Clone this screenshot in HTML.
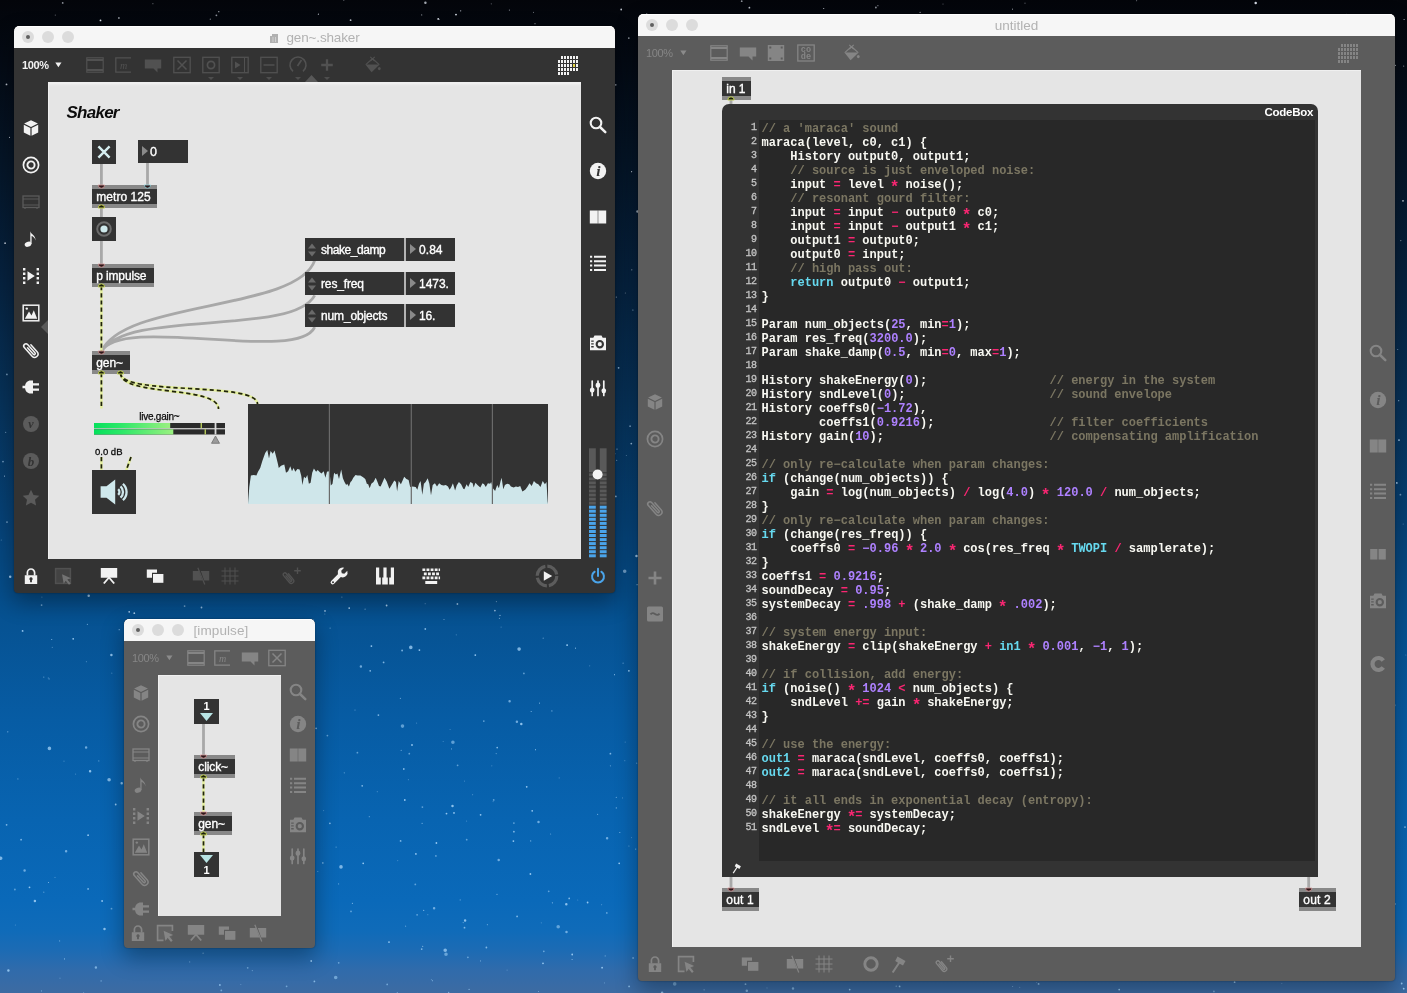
<!DOCTYPE html>
<html><head><meta charset="utf-8"><title>Max gen~ shaker</title>
<style>
*{box-sizing:border-box;margin:0;padding:0}
html,body{width:1407px;height:993px;overflow:hidden;background:#04070c}
body{position:relative;font-family:"Liberation Sans",sans-serif;font-size:12px;color:#fff}
.abs{position:absolute}
#bg{position:absolute;left:0;top:0;width:1407px;height:993px;
 background:linear-gradient(180deg,#03050a 0px,#040a14 60px,#051527 160px,#06223f 280px,#073259 400px,#064277 520px,#065292 620px,#075ca4 720px,#0864b1 820px,#0a69b9 900px,#0f6bb9 930px,#1c6bb4 950px,#306bab 970px,#3d6ba2 993px)}
.win{will-change:transform;position:absolute;border-radius:5px 5px 4px 4px;box-shadow:0 9px 22px 1px rgba(0,0,0,.32),0 0 2px rgba(0,0,0,.4);overflow:hidden}
.tbar{position:absolute;left:0;top:0;right:0;height:22px;background:#f6f6f6;border-radius:5px 5px 0 0;box-shadow:inset 0 1px 0 #fff}
.tl{position:absolute;width:12px;height:12px;border-radius:50%;background:#dcdcdc;top:5px}
.tl.d:after{content:"";position:absolute;left:4px;top:4px;width:4px;height:4px;border-radius:50%;background:#606060}
.ttl{position:absolute;top:0;height:22px;line-height:24px;font-size:13.5px;color:#b2b2b2;white-space:nowrap}
.body{position:absolute;left:0;right:0;top:22px;bottom:0}
.win.act{background:#333}
.win.ina{background:#5c5c5c}
.cv{position:absolute;background:#e5e5e5;overflow:hidden}
.cv:after{content:"";position:absolute;left:0;top:0;right:0;bottom:0;box-shadow:inset 1px 1px 0 #f0f0f0;pointer-events:none}
.cv.g{background:linear-gradient(180deg,#f1f1f1 0,#f0f0f0 1.5px,#e8e8e8 3px,#e5e5e5 5px)}
.ic{position:absolute;width:20px;height:20px;overflow:visible}
.act .ic{color:#f2f2f2}
.act .ic.dm{color:#515151}
.act .ic.dm2{color:#5b5b5b}
.ina .ic{color:#858585}
.zm{position:absolute;font-size:11px;letter-spacing:-.4px;white-space:nowrap}
.act .zm{font-weight:bold}
.act .zm{color:#f2f2f2}
.ina .zm{color:#868686}
/* max objects */
.ob{position:absolute;height:23px;background:#333;border-top:4px solid #888;border-bottom:4px solid #888;color:#fff;font-size:12px;-webkit-text-stroke:.35px #fff;line-height:17px;padding-left:4.300px;white-space:nowrap}
.ui{position:absolute;background:#333}
.nb{position:absolute;height:23px;background:#333;color:#fff;font-size:12px;-webkit-text-stroke:.35px #fff;line-height:25px;white-space:nowrap}
.nb i{position:absolute;left:4px;top:6px;width:0;height:0;border-left:6px solid #8a8a8a;border-top:5.5px solid transparent;border-bottom:5.5px solid transparent}
.cm{position:absolute;color:#0c0c0c;white-space:nowrap}
svg.cords{position:absolute;left:0;top:0;overflow:visible;pointer-events:none}
.pc{fill:none;stroke:#a8a8a8;stroke-width:2.8}
.sgb{fill:none;stroke:#e3ee9c;stroke-width:2.5}
.sgd{fill:none;stroke:#1f220c;stroke-width:1.7;stroke-dasharray:4.2 3}
/* code */
.code{position:absolute;font-family:"Liberation Mono",monospace;font-size:12px;line-height:14px;white-space:pre;color:#f8f8f2;font-weight:bold}
.ln{position:absolute;font-family:"Liberation Mono",monospace;font-size:10px;letter-spacing:-.5px;line-height:14px;text-align:right;color:#c4c4c4;white-space:pre;-webkit-text-stroke:.3px #c4c4c4}
.code u{text-decoration:none;display:inline-block;transform:translateY(2.600px) scale(1.35);transform-origin:50% 50%}
.c{color:#7b7662}.k{color:#f92672}.n{color:#ae81ff}.b{color:#66d9ef}
</style></head><body>
<div id="bg"></div>
<svg class="abs" style="left:0;top:0" width="1407" height="993" fill="none" stroke-linecap="round"><path d="M1170.2 62.7h0M905.7 115.7h0M1219.2 181.5h0M1053.8 68.7h0M533.5 12.4h0M295.3 133.6h0M26.9 134.9h0M1095.1 193.2h0M365.1 26.7h0M1142.3 219.7h0M491.3 3.8h0M1279.4 36.1h0M668.7 291.4h0M990.4 99.7h0M1304.1 138.1h0M830.0 227.4h0M1113.1 234.3h0M532.9 48.9h0M1006.3 266.7h0M318.0 290.0h0M512.6 62.5h0M943.0 4.0h0M355.2 187.3h0M957.1 176.1h0M945.6 243.0h0M939.8 154.6h0M1091.8 118.9h0M239.5 103.8h0M558.1 223.7h0M1346.7 23.9h0M1136.6 0.7h0M806.8 22.2h0M757.7 49.9h0M768.1 167.0h0M351.4 176.7h0M896.3 26.5h0M1227.3 224.9h0M833.0 266.8h0M528.6 162.1h0M322.7 29.6h0M800.4 97.4h0M625.4 293.0h0M1025.0 3.2h0M797.0 153.7h0M130.0 144.1h0M1318.7 207.2h0M666.6 126.6h0M537.0 175.1h0M161.7 29.3h0M439.5 19.3h0M152.9 3.7h0M1346.4 14.3h0M1133.9 214.5h0M819.2 246.0h0M1311.3 297.4h0M872.5 296.0h0M1187.1 19.7h0M1203.4 108.9h0M1113.1 277.5h0M209.9 251.3h0M509.1 159.5h0M427.7 180.9h0M969.4 34.9h0M647.2 164.7h0M778.2 232.1h0M93.5 56.6h0M1059.6 291.7h0M56.9 236.5h0M1229.4 208.9h0M55.3 15.1h0M1390.3 135.9h0M754.9 30.4h0M707.9 125.9h0M773.8 84.8h0M115.4 38.8h0M711.7 59.7h0M737.3 201.4h0M936.7 174.4h0M937.2 34.7h0M610.9 132.0h0M378.7 254.9h0M1305.9 202.1h0M1036.3 143.7h0M1188.4 180.1h0M139.6 209.0h0M1131.2 261.1h0M149.9 89.6h0M671.8 189.4h0M343.8 0.3h0M1086.1 169.0h0" stroke="#e6ecf6" stroke-width="1.2" opacity="0.4"/><path d="M1369.1 91.5h0M841.9 74.3h0M1295.1 254.0h0M186.5 87.5h0M161.5 107.3h0M565.0 50.1h0M15.2 256.7h0M1236.4 39.2h0M470.7 271.7h0M509.4 10.1h0M528.4 166.5h0M836.9 222.4h0M562.0 215.9h0M925.2 236.0h0M852.7 156.2h0M745.6 258.9h0M1106.9 60.7h0M337.4 92.4h0M458.0 251.6h0M862.2 63.2h0M1132.6 291.6h0M800.4 271.9h0M786.4 150.6h0M253.4 46.6h0M524.5 181.1h0M1173.3 116.6h0M58.2 276.3h0M1083.1 198.8h0M85.7 220.7h0M1403.7 66.1h0M74.6 92.2h0M682.2 270.7h0M1090.7 258.0h0M1350.0 31.6h0M247.2 148.9h0M1074.2 242.7h0M1321.0 71.2h0M114.6 221.4h0M654.4 181.3h0M481.9 195.1h0M224.8 257.9h0M460.8 69.5h0M1289.6 78.5h0M951.1 97.4h0M421.7 14.9h0M323.6 178.7h0M867.5 161.0h0M71.2 283.7h0M919.6 96.4h0M1277.9 49.2h0M1315.0 123.2h0M140.3 117.5h0M431.2 187.2h0M314.5 197.7h0M1400.8 240.6h0M329.7 151.1h0M1389.9 15.4h0M947.3 238.3h0M1189.5 217.4h0M697.6 268.1h0M631.8 269.8h0M1106.3 62.8h0M313.9 154.7h0M877.9 5.7h0M601.2 290.1h0M38.5 28.0h0M24.4 27.1h0M743.2 163.7h0M911.7 165.9h0M1180.5 29.1h0M520.1 38.0h0M913.7 118.3h0M1316.2 164.5h0M1386.4 80.5h0M463.0 85.9h0M1341.5 197.2h0M1011.5 24.6h0M590.3 162.4h0M616.3 297.1h0M1012.5 9.2h0M499.2 149.8h0M357.1 286.3h0M1056.1 68.5h0M1041.7 24.7h0M535.0 23.7h0M210.3 19.2h0M812.9 123.0h0M1343.7 114.0h0" stroke="#e6ecf6" stroke-width="1.2" opacity="0.6"/><path d="M1404.1 19.5h0M543.3 73.8h0M1150.6 247.8h0M85.1 175.0h0M1384.5 114.5h0M171.6 92.6h0M218.8 11.7h0M498.9 208.6h0M762.1 72.0h0M673.3 209.2h0M398.1 141.9h0M1288.2 244.0h0M94.3 73.8h0M920.1 12.3h0M435.8 271.9h0M915.6 105.5h0M468.2 291.4h0M1160.9 116.5h0M1389.7 33.4h0M437.6 42.0h0M256.1 260.5h0M379.6 256.3h0M371.5 103.2h0M1127.3 124.3h0M377.1 269.2h0M240.9 66.9h0M949.5 269.1h0M452.5 93.5h0M260.2 38.0h0M188.2 122.7h0M548.4 297.4h0M159.3 117.6h0M981.3 231.9h0M91.8 178.5h0M1327.4 151.1h0M143.1 138.5h0M189.8 298.1h0M48.5 246.1h0M951.6 122.3h0M1333.1 282.1h0M800.1 56.0h0M1395.3 65.4h0M105.5 225.2h0M534.9 271.7h0M401.0 294.1h0M795.1 237.2h0M493.5 66.6h0M1318.3 222.3h0M173.5 248.5h0M1067.3 180.6h0M1032.6 28.3h0M739.6 23.9h0M321.3 242.7h0M816.8 127.1h0M1178.8 43.2h0M318.4 14.2h0M461.8 175.1h0M1292.9 99.5h0M343.0 124.9h0M751.9 55.7h0M586.2 49.6h0M341.7 116.5h0M541.1 86.4h0M1097.6 103.0h0M9.5 137.3h0M293.0 266.4h0M740.2 54.7h0M1305.1 142.3h0M1346.8 281.4h0M1085.7 295.4h0M631.6 171.7h0M577.7 72.1h0M357.6 282.7h0M47.3 271.4h0M823.7 8.5h0M1249.7 125.5h0M131.4 279.9h0M298.1 190.9h0M186.9 186.5h0M524.5 241.7h0M604.9 156.4h0M804.5 25.3h0M160.3 284.8h0M954.2 62.0h0M158.7 81.1h0M1325.2 28.7h0M1141.9 183.0h0M460.7 10.8h0M200.5 104.0h0M45.4 260.9h0M898.7 22.9h0M496.1 227.8h0M191.5 203.4h0M898.2 270.8h0M1134.7 23.7h0M1325.4 269.6h0M583.4 60.3h0M1216.8 17.6h0" stroke="#e6ecf6" stroke-width="1.2" opacity="0.8"/><path d="M665.9 77.1h0M569.5 248.8h0M1082.3 264.5h0M815.7 133.5h0M107.0 211.8h0M434.0 114.0h0M874.8 130.5h0M798.3 26.5h0M1168.9 184.3h0M938.5 274.9h0M1033.0 28.6h0M960.8 182.3h0M461.7 254.2h0M275.8 277.7h0M926.5 265.8h0M609.8 228.3h0M720.7 291.9h0M880.3 265.5h0M1182.0 208.3h0M566.0 283.8h0M1133.7 97.0h0M383.4 150.1h0M444.9 168.3h0M783.9 137.1h0M201.9 204.1h0M37.9 265.0h0M575.3 86.3h0M299.3 296.3h0M407.6 284.0h0M875.9 7.5h0M477.3 70.9h0M555.6 272.8h0M741.7 1.2h0M118.9 18.0h0M1332.4 121.4h0M216.4 15.3h0M1121.1 37.1h0M272.1 79.2h0M326.8 57.7h0M882.1 249.5h0M961.0 177.2h0M889.7 146.6h0M666.3 108.0h0M844.8 116.2h0M986.6 205.4h0M451.1 54.9h0M854.3 256.5h0M504.7 264.7h0M1342.6 48.5h0M86.3 81.6h0M1185.5 154.3h0M615.7 84.8h0M665.7 108.8h0M707.6 238.0h0M608.0 293.9h0M1362.8 18.4h0M525.5 250.3h0M1043.4 205.0h0M602.7 90.6h0M662.8 112.5h0M367.5 293.0h0M912.2 133.5h0M628.8 38.1h0M355.1 132.2h0M226.4 143.9h0M319.0 243.5h0M949.4 39.6h0M603.2 229.3h0M774.7 68.8h0M107.1 120.6h0M741.9 159.9h0M62.7 2.9h0M1099.1 275.8h0M1223.5 243.1h0M895.0 53.7h0" stroke="#e6ecf6" stroke-width="1.8" opacity="0.6"/><path d="M6.5 84.4h0M1121.4 176.4h0M621.2 9.5h0M428.4 140.2h0M63.9 97.8h0M110.5 82.4h0M791.8 175.4h0M360.8 198.5h0M1287.5 167.4h0M846.3 121.8h0M451.2 54.3h0M793.5 163.0h0M746.9 45.0h0M416.1 118.0h0M1159.9 158.4h0M676.3 161.4h0M902.2 124.7h0M1403.0 200.8h0M254.2 127.1h0M990.0 233.4h0M1121.6 108.8h0M1309.2 198.9h0M350.6 20.2h0M939.6 284.5h0M920.7 258.4h0M1293.8 22.7h0M437.1 184.6h0M716.2 21.4h0M748.3 111.9h0M921.5 35.0h0M52.8 28.2h0M1313.2 138.1h0M1323.9 57.0h0M134.6 168.4h0M1374.6 176.9h0M560.8 76.5h0M100.3 243.8h0M285.3 293.4h0M1159.1 263.4h0M365.1 46.2h0M22.3 28.5h0M1092.8 141.0h0M312.2 290.1h0M275.7 261.5h0M734.4 222.1h0M340.6 42.7h0M749.4 7.7h0M211.0 81.7h0M984.3 256.1h0M377.1 75.7h0M881.6 57.7h0M757.0 211.4h0M336.8 27.5h0M198.8 128.0h0M429.5 273.1h0M5.1 243.2h0M582.3 64.7h0M1208.3 238.1h0M687.7 27.6h0M379.9 45.1h0M900.0 70.6h0M441.1 166.6h0M503.9 244.0h0M1037.7 21.3h0M1226.4 195.0h0M1062.3 28.0h0M24.4 285.7h0M593.6 97.5h0M380.4 201.4h0" stroke="#e6ecf6" stroke-width="1.8" opacity="0.8"/><path d="M426.9 90.0h0M991.3 255.2h0M1347.1 112.1h0M1166.0 276.2h0M790.1 163.2h0M806.2 199.6h0M149.4 37.2h0M869.7 45.9h0M976.0 82.3h0M994.2 258.6h0M929.2 66.4h0M75.2 252.1h0M95.3 236.2h0M1175.8 61.3h0M456.0 14.6h0M533.9 285.1h0M234.1 142.7h0M428.0 219.4h0M875.2 88.4h0M1209.4 209.8h0M705.2 225.0h0M464.3 147.3h0M113.6 116.9h0M1148.8 236.9h0M590.0 82.2h0M97.6 265.4h0M1105.0 58.5h0M438.2 18.9h0M797.3 73.8h0M1057.3 47.2h0M952.1 20.6h0M646.7 14.5h0M1090.8 156.7h0M1332.0 291.1h0M662.9 139.8h0M968.8 213.8h0M519.7 284.0h0M603.7 279.2h0M967.0 154.3h0M490.2 241.1h0M674.1 284.2h0M659.5 269.6h0M262.8 177.0h0M1140.8 23.5h0M1123.9 291.1h0M1330.5 119.9h0M1302.0 106.6h0M21.2 198.4h0M821.7 262.9h0M346.1 229.6h0M376.0 117.5h0M229.4 226.9h0M666.7 278.0h0M720.7 99.4h0M100.5 20.4h0M307.2 150.7h0M706.0 119.8h0M101.6 153.7h0M438.6 218.7h0M64.6 180.9h0M736.6 16.5h0M419.6 268.7h0M1352.7 234.3h0M1349.7 114.7h0M1250.3 217.9h0M534.2 61.3h0M78.3 63.1h0M933.7 15.7h0" stroke="#e6ecf6" stroke-width="1.8" opacity="0.95"/><path d="M864.3 278.3h0M517.5 44.2h0M651.0 75.7h0M456.1 139.0h0M425.4 2.7h0M581.5 142.0h0M272.7 250.9h0M186.1 135.1h0M125.4 99.6h0M957.8 202.4h0M199.4 298.7h0M1175.4 136.2h0M96.2 296.2h0M86.5 180.9h0M1068.1 153.6h0M534.4 176.8h0M392.6 52.6h0M1113.5 263.8h0M637.5 211.5h0M956.7 116.1h0M1191.5 267.7h0M1308.2 49.3h0M975.5 55.4h0" stroke="#e6ecf6" stroke-width="2.5" opacity="0.7"/><path d="M1275.1 86.6h0M69.7 271.1h0M859.9 58.1h0M335.4 113.1h0M744.4 272.1h0M1368.6 65.3h0M502.6 244.6h0M578.0 44.8h0M468.6 150.5h0M865.6 182.4h0M986.7 27.5h0M851.3 50.6h0M415.5 42.0h0M955.6 46.2h0M85.1 36.5h0M404.8 48.3h0M937.6 249.9h0M1323.9 269.7h0M910.8 24.3h0M931.4 22.9h0M862.1 246.4h0M482.9 130.8h0M1235.8 265.1h0M239.4 264.7h0M1255.7 2.9h0" stroke="#e6ecf6" stroke-width="2.5" opacity="0.9"/><path d="M903.1 99.6h0M1092.2 93.6h0M386.5 229.1h0" stroke="#e6ecf6" stroke-width="3.6" opacity="0.6"/><path d="M226.3 233.1h0M1077.1 111.9h0M612.2 58.6h0M718.1 266.9h0M261.5 198.8h0M849.9 281.9h0M310.2 244.5h0" stroke="#e6ecf6" stroke-width="3.6" opacity="0.8"/><path d="M920.1 611.3h0M1241.2 599.3h0M41.9 597.1h0M280.5 471.8h0M1062.4 531.1h0M481.3 418.5h0M1273.5 477.9h0M108.1 511.1h0M161.9 619.9h0M74.5 567.9h0M166.4 402.9h0M464.8 517.0h0M1199.7 599.1h0M258.3 545.7h0M425.2 603.7h0M1.3 540.0h0M292.6 393.5h0M1053.8 530.2h0M436.2 510.6h0M936.3 416.4h0M528.3 537.4h0M743.2 448.5h0M858.3 355.0h0M1356.0 410.5h0M220.3 527.4h0M523.3 312.2h0M274.8 364.8h0M702.1 377.7h0M1130.6 317.2h0M1073.1 397.7h0M1298.0 510.6h0M324.8 614.0h0M725.8 313.8h0M1403.2 524.0h0M77.0 470.3h0M958.3 404.7h0M1120.5 616.0h0M279.6 552.8h0M758.3 356.9h0M1190.9 482.4h0M1129.2 323.8h0M749.8 577.6h0M544.5 356.8h0M281.2 375.8h0M757.7 366.5h0M1351.5 406.5h0M244.2 304.5h0M126.3 577.7h0M1130.6 601.9h0M626.4 455.5h0M781.0 531.3h0M1063.6 476.6h0M1200.9 454.2h0M111.6 422.0h0M1188.7 508.6h0M1024.3 557.7h0M412.1 571.5h0M1254.2 545.3h0M1014.3 411.6h0M313.6 619.8h0M104.7 419.8h0M712.3 519.7h0M20.5 448.0h0M689.2 435.8h0M479.2 318.2h0M892.3 562.3h0M101.0 470.4h0M886.4 570.0h0M24.4 445.2h0M515.0 492.6h0M802.8 320.4h0M521.4 363.7h0M289.8 353.4h0M169.9 343.1h0M114.0 555.9h0M1140.9 339.1h0M1376.4 529.0h0M1304.0 500.6h0M1054.9 550.3h0M983.1 569.5h0M840.3 332.6h0M595.9 381.1h0M157.5 433.5h0M510.0 346.5h0M113.2 468.9h0M751.5 535.4h0M418.0 551.6h0" stroke="#b4d6f4" stroke-width="1.2" opacity="0.4"/><path d="M669.4 609.7h0M892.7 591.3h0M341.9 597.1h0M1204.1 346.1h0M378.8 469.8h0M152.8 416.6h0M278.2 526.6h0M1211.6 354.2h0M601.7 366.7h0M349.4 359.2h0M1200.7 481.4h0M1273.7 446.9h0M1155.3 383.2h0M191.7 474.5h0M280.7 464.7h0M1349.8 595.9h0M977.7 522.5h0M212.3 591.2h0M1002.9 402.5h0M168.6 489.5h0M320.2 478.8h0M90.3 416.2h0M294.7 367.3h0M517.6 426.2h0M912.7 331.5h0M1229.3 469.1h0M1397.7 349.5h0M586.7 536.3h0M941.5 433.1h0M899.2 488.5h0M749.7 576.6h0M583.1 403.9h0M642.5 429.4h0M444.0 619.5h0M365.1 609.2h0M1116.3 491.0h0M722.7 535.7h0M500.7 357.5h0M1315.7 317.7h0M799.4 504.4h0M680.9 395.2h0M1347.5 416.3h0M912.2 371.7h0M448.3 512.6h0M614.9 453.7h0M42.5 314.5h0M1036.7 300.7h0M472.3 488.0h0M674.7 335.8h0M777.7 497.8h0M1195.2 545.7h0M981.6 355.3h0M187.6 308.4h0M616.7 460.3h0M694.7 417.0h0M193.0 301.9h0M803.4 541.1h0M875.9 578.1h0M1210.3 544.4h0M334.6 342.0h0M1102.6 547.2h0M894.8 574.6h0M742.6 581.6h0M1202.5 547.4h0M423.9 365.9h0M581.2 588.8h0M797.2 397.2h0M1057.5 336.1h0M1040.1 372.7h0M837.2 580.7h0M1031.5 464.6h0M118.6 450.9h0M855.3 333.3h0M742.9 401.3h0M500.6 582.6h0M1013.4 562.9h0M169.4 433.4h0M499.4 618.3h0M886.4 340.1h0M711.7 570.3h0M751.8 398.3h0M808.7 499.9h0M338.7 538.6h0M1304.2 560.0h0M496.4 601.6h0M5.7 432.3h0M791.6 530.8h0M482.1 512.2h0M706.6 412.2h0M657.5 577.2h0M939.3 433.5h0M1338.7 550.7h0M569.6 406.0h0M588.6 436.1h0M1261.6 343.0h0M955.4 613.7h0M395.1 540.4h0M1027.5 492.6h0M1025.8 486.5h0M981.1 540.9h0M443.1 315.8h0M1212.2 301.6h0M779.5 324.4h0M896.8 593.4h0M326.5 470.9h0" stroke="#b4d6f4" stroke-width="1.2" opacity="0.6"/><path d="M1379.4 394.6h0M153.4 508.8h0M997.0 566.6h0M500.0 615.4h0M1076.0 324.5h0M1322.0 565.7h0M400.2 395.8h0M107.0 303.6h0M496.1 496.9h0M371.0 564.1h0M287.8 380.3h0M1131.5 475.0h0M455.2 370.7h0M169.4 321.4h0M632.9 310.0h0M707.1 400.5h0M1094.2 521.4h0M867.3 342.2h0M101.5 493.2h0M279.6 411.1h0M124.4 361.0h0M1139.2 500.2h0M637.1 584.7h0M641.3 483.4h0M917.1 538.7h0M796.4 346.3h0M498.4 495.5h0M441.1 551.1h0M4.5 476.1h0M932.5 398.1h0M1385.9 618.5h0M1089.2 330.9h0M1237.5 451.5h0M1050.5 574.9h0M743.3 491.7h0M660.0 508.2h0M751.8 333.5h0M832.3 542.8h0M341.6 308.9h0M253.8 496.7h0M365.3 493.2h0M1344.0 386.6h0M377.3 558.0h0M1188.3 541.6h0M225.5 345.8h0M1159.6 342.0h0M914.1 368.8h0M856.1 417.1h0M992.1 421.8h0M1068.4 334.4h0M429.8 476.3h0M923.3 500.4h0M186.8 310.5h0M654.7 560.5h0M286.0 459.1h0M1175.4 377.2h0M170.6 300.6h0M580.2 542.5h0M577.3 469.5h0M771.2 441.4h0M697.0 445.6h0M1085.6 574.7h0M405.8 369.9h0M1364.7 477.6h0M326.1 434.5h0M768.8 332.7h0M963.0 388.5h0M356.8 400.6h0M737.9 591.8h0M197.1 487.2h0M1278.4 562.1h0M1322.0 502.2h0M824.3 389.8h0M277.2 455.3h0M501.8 313.7h0M267.5 497.6h0M543.7 458.0h0M1035.9 340.6h0M1398.7 400.7h0M1385.3 372.7h0M1200.2 326.5h0M660.9 420.5h0M68.4 492.2h0M868.3 344.2h0M667.5 465.8h0M464.7 306.0h0M774.2 502.5h0M1092.5 509.3h0M18.6 392.7h0M739.8 401.6h0M888.8 337.4h0M1185.8 432.6h0M662.9 517.4h0M990.5 462.7h0M617.0 449.1h0M562.6 339.4h0M99.5 409.3h0M460.2 347.9h0M1323.9 517.2h0M1133.4 486.4h0" stroke="#b4d6f4" stroke-width="1.2" opacity="0.8"/><path d="M179.0 583.2h0M182.8 450.4h0M243.3 332.7h0M6.9 374.4h0M304.2 539.1h0M1170.9 418.7h0M1339.3 498.6h0M1138.5 619.4h0M1147.1 460.3h0M90.1 543.0h0M293.2 539.6h0M1242.4 449.1h0M314.1 305.0h0M1112.2 369.9h0M755.9 420.5h0M1343.2 360.1h0M399.2 388.9h0M433.3 527.7h0M893.1 375.5h0M884.5 501.3h0M150.9 437.4h0M521.9 363.6h0M153.2 410.1h0M143.9 304.4h0M64.0 398.4h0M165.5 472.4h0M753.4 469.7h0M3.0 461.6h0M1400.4 494.7h0M1125.1 441.1h0M692.3 381.4h0M1043.5 459.7h0M846.3 505.9h0M869.6 318.1h0M41.6 605.1h0M954.2 553.8h0M263.7 501.9h0M1055.3 427.0h0M630.1 426.2h0M900.4 451.3h0M910.9 609.1h0M642.2 364.0h0M52.4 374.6h0M112.2 318.4h0M459.6 319.2h0M1318.4 428.8h0M574.2 427.0h0M1044.0 613.5h0M483.0 418.4h0M186.7 538.6h0M1328.6 491.0h0M1223.2 333.9h0M1284.1 339.6h0M231.2 458.4h0M1256.2 383.6h0M7.0 522.1h0M184.6 606.1h0M411.3 434.1h0M704.0 313.0h0M1289.2 387.6h0M364.2 516.8h0" stroke="#b4d6f4" stroke-width="1.8" opacity="0.6"/><path d="M1185.3 515.5h0M885.0 550.1h0M1214.9 568.8h0M201.5 607.5h0M1238.5 381.7h0M530.2 564.8h0M187.4 327.6h0M978.0 491.3h0M1148.5 419.1h0M1076.9 517.9h0M505.6 584.2h0M494.9 610.6h0M1206.3 301.5h0M963.9 361.1h0M1029.9 593.3h0M914.7 303.9h0M457.4 604.0h0M650.9 390.2h0M563.1 589.7h0M1180.2 446.8h0M878.5 556.8h0M89.6 362.0h0M1317.1 478.7h0M1135.7 450.9h0M731.5 523.2h0M443.4 494.1h0M1099.4 437.4h0M492.1 587.3h0M369.0 581.5h0M733.2 349.4h0M225.6 328.1h0M207.4 465.8h0M519.7 469.6h0M550.5 586.2h0M847.0 317.3h0M850.7 345.7h0M34.4 321.8h0M581.3 387.3h0M305.0 443.8h0M1316.0 419.9h0M712.1 601.4h0M962.1 544.0h0M297.4 438.3h0M21.3 450.1h0M1260.0 603.8h0M615.8 496.4h0M841.4 420.0h0M410.2 485.0h0M306.9 300.4h0M407.4 428.1h0M281.7 488.2h0M371.2 402.3h0M967.7 314.7h0M27.7 500.9h0M631.3 443.6h0M1189.5 617.9h0M1054.7 561.2h0M1070.8 527.2h0M535.5 321.0h0M1379.1 377.6h0M958.1 557.3h0M871.2 393.4h0M530.4 552.7h0M52.3 535.5h0M834.5 454.1h0M136.3 528.5h0M207.6 450.7h0M465.2 459.5h0M773.6 300.8h0M978.8 498.2h0M755.8 518.4h0M325.0 610.9h0M1315.6 393.5h0M1274.9 369.1h0M430.4 306.6h0M618.6 367.8h0M1063.7 437.4h0M488.6 397.5h0" stroke="#b4d6f4" stroke-width="1.8" opacity="0.8"/><path d="M177.8 475.9h0M538.2 516.3h0M383.2 343.3h0M1066.3 436.3h0M726.0 397.8h0M162.4 502.1h0M14.9 353.1h0M386.6 605.5h0M952.5 580.7h0M694.6 533.6h0M253.1 399.5h0M1272.0 539.6h0M639.3 400.6h0M331.1 437.4h0M349.1 493.4h0M577.8 475.3h0M1380.2 386.6h0M45.2 348.9h0M81.1 546.7h0M1399.0 440.1h0M198.1 321.4h0M654.0 313.8h0M738.6 403.6h0M1345.9 353.4h0M1202.6 605.1h0M968.7 516.1h0M424.2 327.3h0M172.8 523.2h0M1367.5 334.2h0M1335.8 488.1h0M213.1 313.8h0M84.1 578.9h0M209.1 308.9h0M1218.3 301.9h0M164.5 357.2h0M266.6 464.5h0M1218.3 359.6h0M126.4 502.0h0M745.8 410.6h0M655.4 544.0h0M211.0 439.2h0M1396.8 482.9h0M758.6 468.2h0M480.1 511.2h0M1249.8 462.9h0M812.7 519.2h0M461.2 459.0h0M875.2 441.9h0M1327.4 430.3h0M1271.5 392.6h0M349.2 608.1h0M1309.2 448.9h0M1017.3 491.8h0M921.1 524.5h0M1235.5 574.0h0M54.3 410.4h0M33.8 474.0h0M134.3 613.2h0M129.2 611.8h0M1227.0 431.6h0M232.7 378.8h0M1085.4 585.6h0M224.9 387.2h0M454.2 570.9h0M1047.9 418.5h0M675.8 384.5h0M910.8 519.2h0M1079.1 487.7h0M538.1 573.6h0M1278.2 448.6h0M183.8 426.2h0M455.4 576.3h0M300.5 578.5h0M447.0 512.6h0M536.5 558.2h0M935.9 616.5h0M493.6 363.2h0M677.8 560.1h0M277.1 320.4h0M768.9 431.8h0" stroke="#b4d6f4" stroke-width="1.8" opacity="0.95"/><path d="M690.8 516.4h0M1330.7 489.1h0M444.4 312.8h0M505.9 367.6h0M773.9 504.3h0M554.7 458.5h0M174.2 533.8h0M782.4 468.6h0M1237.8 379.2h0M251.2 331.4h0M879.0 548.2h0M308.6 389.2h0M1310.6 339.5h0M34.1 421.1h0M893.6 610.9h0M977.9 378.3h0M60.3 538.8h0M1263.4 573.1h0M1368.0 357.2h0M692.8 375.6h0M1294.4 596.8h0M1304.0 467.9h0M1184.7 527.8h0M1226.0 314.7h0M1108.2 554.7h0M1086.1 568.4h0M997.6 479.1h0M831.7 414.8h0M150.8 319.1h0M410.8 459.3h0M844.5 485.7h0" stroke="#b4d6f4" stroke-width="2.5" opacity="0.7"/><path d="M636.5 555.9h0M1332.2 585.7h0M928.6 438.8h0M158.8 468.1h0M952.1 451.7h0M799.1 497.4h0M969.8 361.5h0M1301.0 496.5h0M243.7 460.7h0M1116.9 502.1h0M10.2 576.8h0M686.1 469.2h0M843.3 321.1h0M88.7 595.7h0M39.1 559.1h0M233.8 491.2h0M57.9 481.4h0M1207.2 491.9h0M758.0 426.6h0" stroke="#b4d6f4" stroke-width="2.5" opacity="0.9"/><path d="M604.3 474.3h0M1047.7 518.0h0M1122.3 508.0h0M685.1 553.7h0M624.7 571.3h0M425.7 547.8h0M1381.8 492.0h0M1036.1 352.7h0M1167.5 549.1h0M691.2 465.3h0" stroke="#b4d6f4" stroke-width="3.6" opacity="0.6"/><path d="M1057.7 482.4h0M831.2 463.1h0M1388.8 493.3h0M377.8 378.4h0M653.0 314.5h0M1172.2 550.2h0M825.9 380.1h0M952.0 362.3h0M60.6 590.7h0" stroke="#b4d6f4" stroke-width="3.6" opacity="0.8"/><path d="M1000.7 943.4h0M1180.6 975.2h0M307.1 861.5h0M182.2 773.8h0M133.4 786.8h0M1382.6 799.2h0M260.0 791.8h0M940.5 948.7h0M933.7 742.5h0M818.5 718.0h0M625.2 742.1h0M493.1 801.6h0M929.0 766.3h0M466.6 821.1h0M797.5 897.1h0M416.6 723.1h0M284.2 628.0h0M1346.4 773.5h0M541.3 922.8h0M1331.6 916.7h0M1024.4 771.4h0M507.1 970.1h0M397.7 860.6h0M1181.7 756.2h0M952.8 941.1h0M1036.6 982.5h0M1059.3 891.1h0M1330.9 653.7h0M146.8 652.8h0M450.1 729.5h0M208.0 698.9h0M86.4 661.7h0M1281.8 983.5h0M589.7 665.8h0M622.5 797.9h0M848.6 840.1h0M55.0 877.4h0M377.3 791.7h0M857.3 980.1h0M1108.7 880.5h0M844.3 856.3h0M75.6 774.1h0M1290.2 829.6h0M309.6 652.1h0M736.1 969.7h0M1290.9 669.7h0M846.4 909.9h0M282.2 635.9h0M949.1 961.2h0M111.8 673.2h0M52.3 647.4h0M1116.1 776.8h0M1354.0 772.7h0M601.6 904.7h0M624.8 760.7h0M240.8 984.5h0M456.3 634.8h0M244.6 738.9h0M1018.0 797.0h0M239.1 831.2h0M650.4 890.9h0M1156.6 729.7h0M491.8 765.8h0M875.2 948.9h0M1153.7 844.6h0M1194.7 875.0h0M1215.7 715.3h0M15.4 925.0h0M1024.3 759.5h0M64.0 761.2h0M670.0 944.6h0M408.4 779.7h0M950.5 818.2h0M1187.2 705.2h0M48.3 677.9h0M1366.5 909.0h0M1192.1 895.8h0M835.9 891.9h0M767.0 987.9h0M793.4 655.2h0M443.2 741.5h0M1362.9 811.9h0M472.6 794.7h0M577.7 900.0h0M886.0 904.7h0M1385.8 907.3h0M1019.7 987.4h0M323.6 810.6h0M1164.1 676.0h0M559.2 777.9h0M1032.7 837.9h0M166.9 916.8h0M83.6 992.7h0M725.1 856.9h0M1332.5 910.3h0M906.0 757.4h0M427.8 914.7h0M1122.9 850.3h0M60.0 978.2h0M631.5 837.6h0M604.5 982.9h0M501.1 627.1h0M723.2 729.0h0M1191.1 958.6h0M771.1 639.0h0M464.5 781.1h0M245.3 803.3h0M873.0 815.1h0M431.4 979.7h0M1405.8 655.0h0M267.7 845.2h0" stroke="#9acbf3" stroke-width="1.2" opacity="0.4"/><path d="M98.8 760.9h0M300.4 920.6h0M279.3 670.2h0M189.4 702.1h0M986.3 838.4h0M623.1 663.2h0M460.2 899.9h0M616.3 797.4h0M1283.5 747.9h0M1331.9 957.2h0M610.4 765.8h0M463.2 922.6h0M1241.8 870.9h0M198.8 687.4h0M43.8 892.2h0M275.1 832.1h0M401.2 750.4h0M835.6 765.8h0M124.5 814.8h0M338.6 883.9h0M649.4 925.9h0M567.1 645.2h0M1017.9 900.7h0M330.1 628.1h0M400.4 698.4h0M1248.1 637.8h0M1131.0 678.6h0M451.5 748.9h0M605.2 955.9h0M836.6 925.1h0M43.8 677.1h0M973.2 731.1h0M597.6 814.4h0M834.8 860.2h0M157.2 912.4h0M397.3 992.7h0M788.2 915.8h0M694.5 684.7h0M1208.1 928.4h0M1372.4 827.6h0M274.2 628.8h0M781.1 939.3h0M405.6 926.2h0M291.3 658.1h0M550.6 834.0h0M496.2 753.6h0M688.2 690.5h0M1287.9 672.3h0M973.2 739.3h0M1005.8 745.6h0M355.0 710.0h0M204.0 708.3h0M1162.9 786.1h0M432.5 980.7h0M151.5 648.5h0M87.4 624.4h0M1206.1 979.9h0M1393.7 787.2h0M1165.7 904.9h0M543.2 638.2h0M800.3 962.6h0M317.8 871.5h0M1259.2 664.0h0M891.8 813.9h0M828.1 695.7h0M1250.8 915.0h0M1221.2 860.8h0M336.1 847.1h0M369.3 816.7h0M1059.0 846.1h0M538.5 991.5h0M636.7 763.2h0M734.0 743.8h0M856.0 653.8h0M1046.8 703.8h0M707.4 969.8h0M252.3 970.6h0M845.4 813.1h0M1134.3 849.2h0M487.4 924.7h0M628.9 846.0h0M1209.1 824.2h0M1241.5 952.2h0M888.6 877.6h0M1032.1 732.0h0M957.1 768.9h0M949.7 905.3h0M1038.1 734.2h0M133.6 898.8h0M301.8 800.0h0M1228.5 809.5h0M1012.6 986.5h0M1033.2 850.6h0M211.4 844.7h0M266.8 820.9h0M344.3 772.8h0M1041.9 647.6h0M1264.4 743.6h0M150.6 879.0h0M480.5 960.9h0M189.7 961.9h0M17.9 778.9h0M802.4 696.8h0M41.5 990.9h0M59.6 940.9h0M49.1 678.9h0M732.0 856.8h0" stroke="#9acbf3" stroke-width="1.2" opacity="0.6"/><path d="M635.7 849.1h0M843.7 772.7h0M448.7 992.4h0M1116.1 908.6h0M619.8 832.5h0M704.1 989.8h0M652.4 646.8h0M755.5 785.3h0M1079.5 759.9h0M897.7 803.9h0M824.2 628.6h0M203.1 953.2h0M899.9 677.2h0M119.2 629.7h0M896.2 986.2h0M1223.5 708.2h0M284.1 762.9h0M530.7 840.9h0M551.9 710.9h0M352.4 903.3h0M924.4 805.1h0M101.1 980.9h0M135.0 789.1h0M572.1 959.5h0M868.1 678.1h0M7.8 731.8h0M148.1 737.1h0M531.2 711.5h0M614.5 674.7h0M310.9 912.3h0M1200.1 875.8h0M1312.0 639.8h0M1341.9 846.1h0M1373.8 780.2h0M758.6 973.1h0M192.0 775.2h0M539.5 703.1h0M423.7 910.4h0M1336.7 858.9h0M177.2 802.2h0M1367.1 692.8h0M203.1 748.6h0M779.7 911.1h0M721.2 683.7h0M733.8 628.1h0M956.4 715.7h0M266.1 878.9h0M249.4 707.3h0M1119.4 798.8h0M469.1 989.4h0M422.1 823.3h0M850.8 750.2h0M675.3 733.7h0M497.0 894.3h0M697.6 811.5h0M947.4 915.5h0M146.6 931.9h0M575.5 648.2h0M535.5 749.7h0M552.4 902.8h0M51.7 639.5h0M1233.3 952.3h0M227.4 623.4h0M1113.4 969.7h0M422.7 946.3h0M616.3 807.9h0M830.0 691.4h0M158.0 635.5h0M673.2 963.8h0M48.5 882.5h0M1182.1 854.0h0M651.6 752.1h0M1086.7 856.9h0M148.9 692.6h0M296.7 854.7h0M679.1 822.6h0M861.3 791.9h0M1017.9 745.0h0M1248.4 713.1h0M1145.2 977.8h0M666.5 743.6h0M1118.0 837.6h0M223.6 636.8h0M713.5 717.7h0M660.6 944.4h0M279.7 653.2h0M64.5 958.9h0M1026.5 809.2h0M791.2 908.9h0M244.9 694.7h0" stroke="#9acbf3" stroke-width="1.2" opacity="0.8"/><path d="M357.4 752.7h0M543.8 951.3h0M467.9 957.3h0M327.4 735.6h0M282.3 623.6h0M548.7 891.3h0M832.5 628.7h0M409.3 753.7h0M1373.3 789.1h0M203.6 901.7h0M1155.7 840.3h0M1342.4 749.6h0M865.6 635.8h0M201.5 771.2h0M285.2 853.0h0M839.7 709.7h0M708.7 718.1h0M815.3 717.2h0M457.6 765.3h0M769.6 843.0h0M221.3 990.4h0M1098.0 881.6h0M694.3 905.7h0M286.6 986.3h0M880.0 907.1h0M155.1 933.9h0M1372.6 927.6h0M1122.0 706.7h0M1045.4 725.3h0M811.8 734.0h0M435.9 855.9h0M1392.5 915.2h0M1145.9 719.1h0M483.8 721.1h0M387.2 984.4h0M606.8 912.9h0M247.7 967.8h0M466.7 839.7h0M834.9 846.8h0M810.1 739.0h0M1192.0 969.4h0M740.2 918.9h0M1288.4 916.9h0M858.2 860.8h0M1174.3 973.5h0M415.3 884.4h0M976.4 677.5h0M771.5 662.4h0M912.0 848.7h0M1268.4 897.2h0M1318.1 717.4h0M322.8 862.9h0M523.9 673.4h0M277.6 789.1h0M785.3 719.0h0M128.5 771.8h0M700.1 803.1h0M1213.9 991.4h0M1369.8 759.7h0M111.5 908.7h0M642.6 788.3h0M699.6 979.7h0M955.8 847.5h0M1375.0 935.4h0M266.7 844.9h0M633.1 958.0h0M493.7 799.9h0M889.1 684.6h0M1333.6 711.2h0M826.4 620.2h0M513.9 823.1h0M1041.8 795.3h0M417.1 914.8h0M351.0 911.4h0M910.5 957.0h0M918.3 670.7h0M14.9 889.5h0M422.4 807.1h0M175.9 759.8h0M338.7 962.8h0" stroke="#9acbf3" stroke-width="1.8" opacity="0.6"/><path d="M716.0 978.4h0M464.5 927.7h0M645.7 914.3h0M1405.0 827.1h0M1047.4 772.5h0M402.1 650.5h0M187.6 863.5h0M798.4 959.7h0M271.7 677.5h0M876.6 721.8h0M194.5 750.8h0M1103.1 716.6h0M1261.7 906.7h0M1359.8 661.0h0M88.1 888.9h0M378.4 715.1h0M1039.0 775.2h0M629.1 986.4h0M197.4 842.3h0M1085.5 622.9h0M1185.7 822.7h0M569.2 898.4h0M1139.8 786.7h0M170.8 733.5h0M1136.4 937.1h0M1065.0 672.4h0M1387.4 855.1h0M170.0 759.5h0M680.5 886.9h0M329.9 823.3h0M662.6 639.6h0M1105.0 867.5h0M1229.4 919.6h0M362.2 785.8h0M1336.3 651.2h0M421.7 949.1h0M745.5 984.2h0M383.6 662.4h0M517.1 916.4h0M1132.7 894.9h0M1378.5 665.0h0M1032.1 638.4h0M819.0 857.0h0M403.8 769.0h0M727.4 868.6h0M1191.4 794.1h0M747.0 625.2h0M219.9 985.0h0M1345.8 752.6h0M400.6 840.9h0M316.1 728.3h0M678.5 698.6h0M1301.8 835.3h0M6.6 824.8h0M874.7 678.9h0M1189.1 764.2h0M1174.5 857.5h0M314.4 981.4h0M486.4 947.5h0M823.3 679.7h0M1080.2 803.4h0M846.7 652.5h0M766.0 727.7h0M655.4 741.8h0M1366.8 912.1h0M254.1 763.9h0M497.2 747.6h0M21.1 839.7h0M925.2 973.0h0M740.4 912.1h0M1394.9 904.0h0M141.6 901.2h0M1122.6 799.6h0M1237.2 958.0h0M902.0 642.0h0M696.8 852.5h0M179.2 689.0h0M610.4 753.7h0M370.2 670.8h0M759.8 644.2h0M1010.0 691.2h0M251.2 932.0h0M425.3 629.0h0M698.1 755.1h0M1271.8 805.2h0M915.2 901.9h0M912.8 978.3h0M654.3 678.4h0M513.9 831.7h0M1270.9 724.1h0M746.2 904.6h0M860.1 970.9h0M1133.4 876.0h0M937.0 969.6h0" stroke="#9acbf3" stroke-width="1.8" opacity="0.8"/><path d="M1403.7 988.7h0M1379.6 652.3h0M899.6 986.4h0M819.2 846.0h0M890.6 819.4h0M287.4 626.9h0M1128.0 699.7h0M475.3 655.1h0M543.0 963.3h0M311.2 961.0h0M793.3 791.5h0M1250.3 951.1h0M1204.5 838.6h0M1381.6 784.1h0M924.2 933.7h0M22.6 630.9h0M926.2 777.5h0M102.1 901.0h0M389.0 942.1h0M530.4 874.0h0M1234.6 982.2h0M436.4 843.0h0M532.2 810.8h0M480.6 814.8h0M1111.9 925.5h0M454.0 812.9h0M446.5 813.6h0M229.0 745.1h0M1119.2 989.6h0M789.9 913.0h0M415.9 853.9h0M964.7 757.1h0M567.1 645.1h0M693.6 664.1h0M88.1 835.2h0M587.6 902.5h0M412.0 745.0h0M162.0 682.8h0M832.4 631.8h0M707.9 786.8h0M1172.1 820.6h0M1073.8 949.0h0M628.9 670.8h0M1339.5 770.5h0M183.5 742.7h0M835.5 639.0h0M687.1 905.7h0M1156.1 910.0h0M363.2 863.3h0M732.7 709.6h0M715.1 794.8h0M1164.7 766.7h0M602.1 967.7h0M925.1 904.4h0M765.8 934.4h0M1390.0 723.8h0M1021.2 687.7h0M668.6 853.4h0M849.7 989.6h0M513.4 841.1h0M1028.8 781.4h0M572.2 954.5h0M619.2 863.3h0M29.5 887.3h0M73.2 638.8h0M1365.8 756.8h0M925.4 790.3h0M1038.6 983.9h0M670.4 794.6h0M705.5 631.9h0M177.7 731.0h0M1202.6 810.6h0M867.7 772.0h0M115.7 804.5h0M419.4 650.1h0M655.3 877.3h0M138.7 644.8h0M254.7 933.9h0M371.4 646.1h0M1052.9 671.2h0M1225.5 750.1h0M1374.4 954.7h0M1401.7 983.5h0M404.8 800.0h0M526.7 786.8h0M1159.2 768.8h0M697.1 876.4h0M1143.0 781.1h0M728.6 976.0h0M1247.2 681.7h0" stroke="#9acbf3" stroke-width="1.8" opacity="0.95"/><path d="M1280.7 696.1h0M921.6 801.7h0M1218.7 792.7h0M360.9 666.6h0M746.8 990.7h0M222.8 761.1h0M983.0 698.8h0M798.3 905.6h0M434.1 908.2h0M509.6 701.2h0M66.1 851.3h0M1182.2 644.7h0M173.3 870.6h0M95.9 967.5h0M516.9 721.7h0M1130.5 971.8h0M1180.8 651.3h0M1287.2 650.9h0M1393.4 944.9h0M239.3 721.0h0M607.1 838.3h0M1363.9 783.4h0M664.8 940.3h0M825.8 887.1h0M86.1 747.6h0M915.3 678.6h0M1059.7 914.6h0M538.5 822.0h0M1265.6 838.5h0M193.5 728.4h0M24.6 870.4h0M566.5 932.0h0M1139.7 924.0h0M873.1 736.5h0M498.7 860.1h0M789.1 782.5h0M793.0 988.5h0M818.8 731.9h0" stroke="#9acbf3" stroke-width="2.5" opacity="0.7"/><path d="M662.1 992.8h0M1267.6 929.1h0M282.7 677.6h0M801.0 912.1h0M566.3 904.3h0M214.0 623.4h0M90.1 771.3h0M969.7 661.9h0M782.5 890.4h0M979.1 780.8h0M521.3 724.1h0M190.9 673.5h0M465.1 920.6h0M452.5 805.9h0M892.5 735.0h0M1016.7 850.7h0M1326.0 794.9h0M852.9 802.4h0M755.0 709.8h0M1065.0 876.4h0M8.4 970.6h0M34.9 901.0h0M104.5 928.9h0M877.4 968.4h0M1032.7 765.4h0M111.4 655.0h0M1394.2 705.3h0M121.7 783.2h0M913.2 957.6h0M1075.9 946.5h0M1004.1 634.9h0M675.5 858.5h0" stroke="#9acbf3" stroke-width="2.5" opacity="0.9"/><path d="M286.9 834.3h0M986.7 756.4h0M278.8 927.0h0M1163.7 630.3h0M688.8 755.9h0M956.6 712.0h0M823.8 934.4h0M558.2 926.8h0M402.5 726.1h0M830.4 692.4h0M855.8 824.9h0M1172.0 930.8h0M674.7 983.9h0M1259.6 769.5h0M253.9 689.6h0M335.7 977.5h0M452.9 742.3h0M446.0 954.2h0M228.9 699.1h0" stroke="#9acbf3" stroke-width="3.6" opacity="0.6"/><path d="M0.7 858.3h0M300.1 893.7h0M519.1 649.1h0M341.0 866.9h0M796.3 803.1h0M410.8 647.4h0M445.2 950.3h0M677.9 636.8h0M109.1 779.8h0M746.8 905.6h0M49.4 748.4h0M1186.3 768.8h0M259.3 654.2h0" stroke="#9acbf3" stroke-width="3.6" opacity="0.8"/></svg>
<svg width="0" height="0" style="position:absolute">
<defs>
<!-- sidebar left -->
<symbol id="i-cube" viewBox="0 0 20 20"><path fill="currentColor" d="M10 2.2 16.9 5.6 10 9 3.1 5.6zM2.8 6.7 9.4 10v7.8L2.8 14.4zM17.2 6.7 10.6 10v7.8l6.6-3.4z"/></symbol>
<symbol id="i-target" viewBox="0 0 20 20"><circle cx="10" cy="10" r="7.6" fill="none" stroke="currentColor" stroke-width="1.7"/><circle cx="10" cy="10" r="3.6" fill="none" stroke="currentColor" stroke-width="1.9"/></symbol>
<symbol id="i-beap" viewBox="0 0 20 20"><rect x="2" y="4" width="16" height="11.5" fill="none" stroke="currentColor" stroke-width="1.3"/><path d="M2 7h16M2 13h16" stroke="currentColor" stroke-width="1.2"/><path d="M4 15.5v1.5M16 15.5v1.5" stroke="currentColor" stroke-width="1.2"/></symbol>
<symbol id="i-note" viewBox="0 0 20 20"><ellipse cx="7" cy="15.2" rx="3.4" ry="2.5" transform="rotate(-22 7 15.2)" fill="currentColor"/><path d="M9.3 15V2.2c.4 3 5.600 4 5.200 9.300-.4-3-3.200-4.200-3.900-4.400V15z" fill="currentColor"/></symbol>
<symbol id="i-film" viewBox="0 0 20 20"><path fill="currentColor" d="M2 2h2.400v2.400H2zM2 6.500h2.400v2.400H2zM2 11h2.400v2.400H2zM2 15.500h2.400v2.400H2zM15.600 2H18v2.400h-2.400zM15.600 6.500H18v2.400h-2.400zM15.600 11H18v2.400h-2.400zM15.600 15.500H18v2.400h-2.400zM6.500 5.300 13.800 10 6.500 14.700z"/></symbol>
<symbol id="i-image" viewBox="0 0 20 20"><rect x="2.200" y="2.200" width="15.600" height="15.600" fill="none" stroke="currentColor" stroke-width="1.500"/><path fill="currentColor" d="M3.800 15.800 8 8.500l2.500 4 2.300-5.200 3.400 8.500z"/><circle cx="5.800" cy="5.600" r="1.200" fill="currentColor"/></symbol>
<symbol id="i-clip" viewBox="0 0 20 20"><path transform="rotate(-42 10 10) translate(10 10) scale(1.12) translate(-10 -10)" fill="none" stroke="currentColor" stroke-width="1.350" stroke-linecap="round" d="M13 6.500v8.300a3 3 0 0 1-6 0V4.400a2 2 0 0 1 4 0v9.800a1 1 0 0 1-2 0V6.500"/></symbol>
<symbol id="i-plug" viewBox="0 0 20 20"><path fill="currentColor" d="M12 3.500v2.700h6v2.200h-6v3.200h6v2.200h-6v2.700H9.500C6.500 16.500 4.300 14 4.100 11.200H1.500V8.800h2.600C4.300 6 6.500 3.500 9.500 3.500z"/></symbol>
<symbol id="i-vc" viewBox="0 0 20 20"><circle cx="10" cy="10" r="8" fill="currentColor"/><text x="10" y="14" text-anchor="middle" font-family="Liberation Serif" font-style="italic" font-weight="bold" font-size="12" fill="#333">v</text></symbol>
<symbol id="i-bc" viewBox="0 0 20 20"><circle cx="10" cy="10" r="8" fill="currentColor"/><text x="10" y="14.500" text-anchor="middle" font-family="Liberation Serif" font-style="italic" font-weight="bold" font-size="13" fill="#333">b</text></symbol>
<symbol id="i-star" viewBox="0 0 20 20"><path fill="currentColor" d="M10 1.800l2.500 5.300 5.800.7-4.300 4 1.100 5.800L10 14.800l-5.100 2.800L6 11.800l-4.300-4 5.800-.7z"/></symbol>
<!-- sidebar right -->
<symbol id="i-search" viewBox="0 0 20 20"><circle cx="8" cy="8" r="5.300" fill="none" stroke="currentColor" stroke-width="2.100"/><path d="M12 12l5.300 5.100" stroke="currentColor" stroke-width="2.500" stroke-linecap="round"/></symbol>
<symbol id="i-info" viewBox="0 0 20 20"><circle cx="10" cy="10" r="8.200" fill="currentColor"/><text x="10.300" y="15.300" text-anchor="middle" font-family="Liberation Serif" font-style="italic" font-weight="bold" font-size="15.500" fill="#333">i</text></symbol>
<symbol id="i-info2" viewBox="0 0 20 20"><circle cx="10" cy="10" r="8.200" fill="currentColor"/><text x="10.300" y="15.300" text-anchor="middle" font-family="Liberation Serif" font-style="italic" font-weight="bold" font-size="15.500" fill="#5c5c5c">i</text></symbol>
<symbol id="i-book" viewBox="0 0 20 20"><path fill="currentColor" d="M1.800 3.500h7.900v13H1.800zM10.300 3.500h7.900v13h-7.900z"/><path d="M10 3.500v13" stroke="currentColor" stroke-width=".6" opacity=".6"/></symbol>
<symbol id="i-list" viewBox="0 0 20 20"><path fill="currentColor" d="M2 2.8h2.200v2H2zM6 2.8h12v2H6zM2 7.2h2.200v2H2zM6 7.2h12v2H6zM2 11.6h2.200v2H2zM6 11.6h12v2H6zM2 16h2.200v2H2zM6 16h12v2H6z"/></symbol>
<symbol id="i-camera" viewBox="0 0 20 20"><path fill="currentColor" fill-rule="evenodd" d="M6.500 2.500h7l1.200 2.300H18v12.500H2V4.800h3.300zM11.800 7a4.200 4.200 0 1 0 0 8.400 4.200 4.200 0 0 0 0-8.400zm0 2.100a2.100 2.100 0 1 1 0 4.200 2.100 2.100 0 0 1 0-4.200zM3.200 7.500h2.500v1.300H3.200zM3.200 10.300h2.500v1.300H3.200zM3.200 13.100h2.500v1.300H3.200z"/></symbol>
<symbol id="i-sliders" viewBox="0 0 20 20"><path d="M4.200 3v14.500M10 3v14.500M15.800 3v14.500" stroke="currentColor" stroke-width="1.700" stroke-linecap="round"/><ellipse cx="4.200" cy="12" rx="2.300" ry="2.600" fill="currentColor"/><ellipse cx="10" cy="7.200" rx="2.300" ry="2.600" fill="currentColor"/><ellipse cx="15.800" cy="12.800" rx="2.300" ry="2.600" fill="currentColor"/></symbol>
<symbol id="i-power" viewBox="0 0 20 20"><path d="M6.300 5.200a6.600 6.600 0 1 0 7.400 0" fill="none" stroke="currentColor" stroke-width="2.200" stroke-linecap="round"/><path d="M10 2v8" stroke="currentColor" stroke-width="2.200" stroke-linecap="round"/></symbol>
<symbol id="i-bookS" viewBox="0 0 20 20"><path fill="currentColor" d="M2.200 5h7.200v10.500H2.200zM10.600 5h7.200v10.500h-7.200z"/></symbol>
<symbol id="i-cee" viewBox="0 0 20 20"><path d="M15.300 6.400a6 6 0 1 0 0 7.200" fill="none" stroke="currentColor" stroke-width="4.200"/></symbol>
<symbol id="i-plus" viewBox="0 0 20 20"><path d="M10 3.500v13M3.500 10h13" stroke="currentColor" stroke-width="2.600"/></symbol>
<symbol id="i-tilde" viewBox="0 0 20 20"><rect x="2" y="2.500" width="16" height="15" rx="1.500" fill="currentColor"/><path d="M5.500 10.400c1.500-2 3-1.500 4.500-.4s3 1.600 4.500-.4" fill="none" stroke="#5c5c5c" stroke-width="1.800"/></symbol>
<!-- bottom bar -->
<symbol id="i-lock" viewBox="0 0 20 20"><path fill="currentColor" fill-rule="evenodd" d="M3.800 9.200h12.400v8.800H3.800zM10 11.200a1.700 1.700 0 0 0-.9 3.100v2h1.800v-2a1.700 1.700 0 0 0-.9-3.100z"/><path d="M6.400 9.500V6.600a3.600 3.600 0 0 1 7.200 0v2.900" fill="none" stroke="currentColor" stroke-width="1.700"/></symbol>
<symbol id="i-select" viewBox="0 0 20 20"><rect x="2.600" y="2.600" width="14.800" height="14.800" fill="currentColor" fill-opacity=".55" stroke="currentColor" stroke-width="1.500"/><path fill="#727272" d="M9 8.200l9 4-3.700 1.300 3.300 4-1.600 1.300-3.300-4.100-2 3z"/></symbol>
<symbol id="i-select2" viewBox="0 0 20 20"><path d="M17.400 8V2.600H2.600v14.800H8.500" fill="none" stroke="currentColor" stroke-width="1.700"/><rect x="3.400" y="3.400" width="13.200" height="13.200" fill="currentColor" fill-opacity=".18"/><path fill="currentColor" d="M8.600 7.800l9.600 4.200-3.900 1.400 3.400 4.100-1.700 1.400-3.400-4.200-2.100 3.200z"/></symbol>
<symbol id="i-present" viewBox="0 0 20 20"><path fill="currentColor" d="M1.800 2h16.400v9.800H1.800z"/><path d="M10 11.500l-5.200 6M10 11.500l5.200 6" stroke="currentColor" stroke-width="1.900" fill="none"/></symbol>
<symbol id="i-windows" viewBox="0 0 20 20"><path fill="currentColor" d="M1.800 3.500h10.200v3.300H7v5H1.800z"/><rect x="8" y="8" width="10.400" height="8.800" fill="currentColor"/></symbol>
<symbol id="i-noflag" viewBox="0 0 20 20"><path fill="currentColor" d="M1.800 5h6.300l3.400 9.500H1.800zM9.800 5h8.400v9.500h-5z"/><path d="M6.800 1.800l7 16.800" stroke="currentColor" stroke-width="1.200"/></symbol>
<symbol id="i-hash" viewBox="0 0 20 20"><path d="M5 1.500v17M10 1.500v17M15 1.500v17M1.500 5h17M1.500 10h17M1.500 15h17" stroke="currentColor" stroke-width="1"/></symbol>
<symbol id="i-clipplus" viewBox="0 0 20 20"><path transform="translate(-1.500 2.500) rotate(-40 9 10) scale(.88)" fill="none" stroke="currentColor" stroke-width="1.500" stroke-linecap="round" d="M12.800 6.500v8.300a2.800 2.800 0 0 1-5.600 0V4.600a1.900 1.900 0 0 1 3.800 0v9.600a.9.900 0 0 1-1.900 0V6.500"/><path d="M15.500 1.500v6.500M12.200 4.800h6.600" stroke="currentColor" stroke-width="1.400"/></symbol>
<symbol id="i-wrench" viewBox="0 0 20 20"><path fill="currentColor" d="M18.300 4.800l-3 3-2.500-.6-.6-2.500 3-3a5 5 0 0 0-6.300 6.500L2.200 14.900a2 2 0 1 0 2.900 2.900l6.700-6.700a5 5 0 0 0 6.500-6.300zM4 17.200a1 1 0 1 1 0-2 1 1 0 0 1 0 2z"/></symbol>
<symbol id="i-piano" viewBox="0 0 20 20"><path fill="currentColor" d="M1 1.500h3.200v10h1.600V18.500H1zM8.400 1.500h3.200v10h1.200v7H7.200v-7h1.200zM15.800 1.500H19v17h-4.800v-7h1.600z"/></symbol>
<symbol id="i-keyb" viewBox="-.5 0 21 20"><path fill="currentColor" d="M1 2h3v2.800H1zM5.300 2h3v2.800h-3zM9.600 2h3v2.800h-3zM13.900 2h3v2.800h-3zM18 2h1.500v2.800H18zM2.500 6.300h3v2.800h-3zM6.800 6.300h3v2.800h-3zM11.100 6.300h3v2.800h-3zM15.400 6.300h3v2.800h-3zM1 10.600h3v2.800H1zM5.300 10.600h3v2.800h-3zM9.600 10.600h3v2.800h-3zM13.900 10.600h3v2.800h-3zM18 10.600h1.500v2.800H18zM4 15.300h12.500v3H4z"/></symbol>
<symbol id="i-playc" viewBox="0 0 24 24"><circle cx="12" cy="12" r="9.800" fill="none" stroke="#5c5c5c" stroke-width="3.200" stroke-dasharray="13.400 2"/><path fill="#f2f2f2" d="M8.800 7.300 17.200 12 8.800 16.700z"/></symbol>
<symbol id="i-ring" viewBox="0 0 20 20"><circle cx="10" cy="10" r="6.200" fill="none" stroke="currentColor" stroke-width="2.900"/></symbol>
<symbol id="i-hammer" viewBox="0 0 20 20"><path fill="currentColor" d="M8.500 2.500l8 4.500-2.500 4.500-3.300-1.800L4.500 19 2.800 18l6.200-9.300-2.800-1.600z"/></symbol>
<!-- top toolbar -->
<symbol id="t-obj" viewBox="0 0 20 20"><rect x="1.800" y="2.800" width="16.400" height="14.400" fill="none" stroke="currentColor" stroke-width="1.200"/><path d="M2 5h16M2 15h16" stroke="currentColor" stroke-width="2.200"/></symbol>
<symbol id="t-msg" viewBox="0 0 20 20"><path d="M17 2.800H1.800v14.400H17" fill="none" stroke="currentColor" stroke-width="1.300"/><text x="9.500" y="13.500" text-anchor="middle" font-family="Liberation Serif" font-style="italic" font-size="10" fill="currentColor">m</text></symbol>
<symbol id="t-bubble" viewBox="0 0 20 20"><path fill="currentColor" d="M1.800 4.500h16.400v9h-3.700v4l-4-4H1.800z"/></symbol>
<symbol id="t-toggle" viewBox="0 0 20 20"><rect x="1.800" y="2.300" width="16.400" height="15.400" fill="none" stroke="currentColor" stroke-width="1.300"/><path d="M5.500 5.500l9 9M14.500 5.500l-9 9" stroke="currentColor" stroke-width="1.500"/></symbol>
<symbol id="t-button" viewBox="0 0 20 20"><rect x="1.800" y="2.300" width="16.400" height="15.400" fill="none" stroke="currentColor" stroke-width="1.300"/><circle cx="10" cy="10" r="3.600" fill="none" stroke="currentColor" stroke-width="1.700"/></symbol>
<symbol id="t-playbox" viewBox="0 0 20 20"><rect x="1.800" y="2.300" width="16.400" height="15.400" fill="none" stroke="currentColor" stroke-width="1.300"/><path fill="currentColor" d="M5 6.500 10.500 10 5 13.500z"/><path d="M14.500 2.500v15" stroke="currentColor" stroke-width="1"/></symbol>
<symbol id="t-slider" viewBox="0 0 20 20"><rect x="1.800" y="2.300" width="16.400" height="15.400" fill="none" stroke="currentColor" stroke-width="1.300"/><path d="M4.500 10h11" stroke="currentColor" stroke-width="1.500"/></symbol>
<symbol id="t-dial" viewBox="0 0 20 20"><path d="M5 16.300a8 8 0 1 1 10 0" fill="none" stroke="currentColor" stroke-width="1.600"/><path d="M9.500 11l4-6" stroke="currentColor" stroke-width="1.700"/></symbol>
<symbol id="t-plus" viewBox="0 0 20 20"><path d="M10 4.200v11.600M4.200 10h11.600" stroke="currentColor" stroke-width="2.300"/></symbol>
<symbol id="t-bucket" viewBox="0 0 20 20"><path fill="currentColor" d="M2.400 9.600h14.200L8.600 17.200z"/><path d="M2.800 9.600 9.500 3.600l6.700 6" fill="none" stroke="currentColor" stroke-width="1.100"/><path d="M7.300 1.800l4.400 4.400M11.700 1.800 7.300 6.200" stroke="currentColor" stroke-width="1.100"/><ellipse cx="16.300" cy="13.600" rx="1.400" ry="1.700" fill="currentColor"/></symbol>
<symbol id="t-fsq" viewBox="0 0 20 20"><rect x="1.800" y="2" width="16.400" height="16" fill="currentColor"/><g fill="#5c5c5c"><rect x="3.300" y="3.500" width="2" height="2"/><rect x="14.700" y="3.500" width="2" height="2"/><rect x="3.300" y="14.500" width="2" height="2"/><rect x="14.700" y="14.500" width="2" height="2"/></g></symbol>
<symbol id="t-code" viewBox="0 0 20 20"><rect x="1.800" y="2" width="16.400" height="16" fill="none" stroke="currentColor" stroke-width="1.300"/><text x="10" y="9.400" text-anchor="middle" font-family="Liberation Mono" font-weight="bold" font-size="8.600" fill="currentColor">co</text><text x="10" y="16" text-anchor="middle" font-family="Liberation Mono" font-weight="bold" font-size="8.600" fill="currentColor">de</text></symbol>
<symbol id="t-grid" viewBox="0 0 20 19"><path fill="currentColor" d="M3 0h2v3h-2zM6 0h2v3h-2zM9 0h2v3h-2zM12 0h2v3h-2zM15 0h2v3h-2zM18 0h2v3h-2zM0 4h2v3h-2zM3 4h2v3h-2zM6 4h2v3h-2zM9 4h2v3h-2zM12 4h2v3h-2zM15 4h2v3h-2zM18 4h2v3h-2zM0 8h2v3h-2zM3 8h2v3h-2zM6 8h2v3h-2zM9 8h2v3h-2zM12 8h2v3h-2zM18 8h2v3h-2zM0 12h2v3h-2zM3 12h2v3h-2zM6 12h2v3h-2zM9 12h2v3h-2zM12 12h2v3h-2zM15 12h2v3h-2zM18 12h2v3h-2zM0 16h2v3h-2zM3 16h2v3h-2zM6 16h2v3h-2zM9 16h2v3h-2z"/><rect x="15" y="8" width="2" height="3" fill="currentColor"/></symbol>
</defs></svg>

<div class="win act" style="left:14px;top:26px;width:601px;height:566.6px"><div class="abs" style="left:-14px;top:-26px;width:1407px;height:993px"><div class="tbar" style="left:14px;top:26px;width:601px;right:auto"></div><div class="tl d" style="left:22px;top:31px"></div><div class="tl" style="left:42px;top:31px"></div><div class="tl" style="left:62px;top:31px"></div><svg class="abs" style="left:270px;top:34px" width="9" height="10"><path fill="#b0b0b0" d="M0 2h2V0h6v9H0z"/><path d="M3 3v5M5.500 3v5" stroke="#d8d8d8" stroke-width=".8"/></svg><div class="ttl" style="left:286.500px;top:26px;letter-spacing:-.15px">gen~.shaker</div><div class="zm" style="left:22px;top:58px;line-height:14px">100%</div><svg class="abs" style="left:55px;top:62px" width="7" height="6"><path fill="#f2f2f2" d="M.3.500h6.200L3.400 5.300z"/></svg><svg class="ic dm" style="left:85px;top:55px;width:20px;height:20px"><use href="#t-obj"/></svg><svg class="ic dm" style="left:114px;top:55px;width:20px;height:20px"><use href="#t-msg"/></svg><svg class="ic dm" style="left:142.5px;top:55px;width:20px;height:20px"><use href="#t-bubble"/></svg><svg class="ic dm" style="left:171.5px;top:55px;width:20px;height:20px"><use href="#t-toggle"/></svg><svg class="ic dm" style="left:200.5px;top:55px;width:20px;height:20px"><use href="#t-button"/></svg><svg class="ic dm" style="left:229.5px;top:55px;width:20px;height:20px"><use href="#t-playbox"/></svg><svg class="ic dm" style="left:258.7px;top:55px;width:20px;height:20px"><use href="#t-slider"/></svg><svg class="ic dm" style="left:287.5px;top:55px;width:20px;height:20px"><use href="#t-dial"/></svg><svg class="ic dm" style="left:316.5px;top:55px;width:20px;height:20px"><use href="#t-plus"/></svg><svg class="ic dm" style="left:362.5px;top:55px;width:20px;height:20px"><use href="#t-bucket"/></svg><svg class="abs" style="left:207.5px;top:76.500px" width="6" height="3"><path fill="#4e4e4e" d="M0 0h6L3 3z"/></svg><svg class="abs" style="left:236.5px;top:76.500px" width="6" height="3"><path fill="#4e4e4e" d="M0 0h6L3 3z"/></svg><svg class="abs" style="left:265.7px;top:76.500px" width="6" height="3"><path fill="#4e4e4e" d="M0 0h6L3 3z"/></svg><svg class="abs" style="left:294.5px;top:76.500px" width="6" height="3"><path fill="#4e4e4e" d="M0 0h6L3 3z"/></svg><svg class="abs" style="left:323.5px;top:76.500px" width="6" height="3"><path fill="#4e4e4e" d="M0 0h6L3 3z"/></svg><svg class="abs" style="left:305.300px;top:75px" width="13" height="7"><path fill="#585858" d="M0 7 6.500 0 13 7z"/></svg><svg class="ic" style="left:558px;top:56px;width:20px;height:19px"><use href="#t-grid"/></svg><div class="abs" style="left:573px;top:64px;width:2px;height:3px;background:#e6d84a"></div><svg class="ic " style="left:21px;top:117.5px;width:20px;height:20px"><use href="#i-cube"/></svg><svg class="ic " style="left:21px;top:154.5px;width:20px;height:20px"><use href="#i-target"/></svg><svg class="ic dm2" style="left:21px;top:191.5px;width:20px;height:20px"><use href="#i-beap"/></svg><svg class="ic " style="left:21px;top:228.5px;width:20px;height:20px"><use href="#i-note"/></svg><svg class="ic " style="left:21px;top:265.5px;width:20px;height:20px"><use href="#i-film"/></svg><svg class="ic " style="left:21px;top:302.5px;width:20px;height:20px"><use href="#i-image"/></svg><svg class="ic " style="left:21px;top:339.5px;width:20px;height:20px"><use href="#i-clip"/></svg><svg class="ic " style="left:21px;top:376.5px;width:20px;height:20px"><use href="#i-plug"/></svg><svg class="ic dm2" style="left:21px;top:413.5px;width:20px;height:20px"><use href="#i-vc"/></svg><svg class="ic dm2" style="left:21px;top:450.5px;width:20px;height:20px"><use href="#i-bc"/></svg><svg class="ic dm2" style="left:21px;top:487.5px;width:20px;height:20px"><use href="#i-star"/></svg><svg class="abs" style="left:41px;top:320px" width="7" height="14"><path fill="#5a5a5a" d="M7 0v14L0 7z"/></svg><svg class="ic " style="left:588px;top:114.5px;width:20px;height:20px"><use href="#i-search"/></svg><svg class="ic " style="left:588px;top:160.5px;width:20px;height:20px"><use href="#i-info"/></svg><svg class="ic " style="left:588px;top:206.5px;width:20px;height:20px"><use href="#i-book"/></svg><svg class="ic " style="left:588px;top:252.5px;width:20px;height:20px"><use href="#i-list"/></svg><svg class="ic " style="left:588px;top:333px;width:20px;height:20px"><use href="#i-camera"/></svg><svg class="ic " style="left:588px;top:378px;width:20px;height:20px"><use href="#i-sliders"/></svg><svg class="abs" style="left:588px;top:446px" width="20" height="112"><rect x="1" y="2.300" width="6.800" height="24" fill="#595959"/><rect x="1" y="27.3" width="6.800" height="3" fill="#595959"/><rect x="1" y="31.4" width="6.800" height="3" fill="#595959"/><rect x="1" y="35.4" width="6.800" height="3" fill="#595959"/><rect x="1" y="39.4" width="6.800" height="3" fill="#595959"/><rect x="1" y="43.5" width="6.800" height="3" fill="#595959"/><rect x="1" y="47.5" width="6.800" height="3" fill="#595959"/><rect x="1" y="51.6" width="6.800" height="3" fill="#595959"/><rect x="1" y="55.6" width="6.800" height="3" fill="#595959"/><rect x="1" y="59.7" width="6.800" height="3" fill="#4aa4ea"/><rect x="1" y="63.7" width="6.800" height="3" fill="#4aa4ea"/><rect x="1" y="67.8" width="6.800" height="3" fill="#4aa4ea"/><rect x="1" y="71.8" width="6.800" height="3" fill="#4aa4ea"/><rect x="1" y="75.9" width="6.800" height="3" fill="#4aa4ea"/><rect x="1" y="79.9" width="6.800" height="3" fill="#4aa4ea"/><rect x="1" y="84.0" width="6.800" height="3" fill="#4aa4ea"/><rect x="1" y="88.0" width="6.800" height="3" fill="#4aa4ea"/><rect x="1" y="92.1" width="6.800" height="3" fill="#4aa4ea"/><rect x="1" y="96.1" width="6.800" height="3" fill="#4aa4ea"/><rect x="1" y="100.2" width="6.800" height="3" fill="#4aa4ea"/><rect x="1" y="104.2" width="6.800" height="3" fill="#4aa4ea"/><rect x="1" y="108.3" width="6.800" height="3" fill="#4aa4ea"/><rect x="11.8" y="2.300" width="6.800" height="24" fill="#595959"/><rect x="11.8" y="27.3" width="6.800" height="3" fill="#595959"/><rect x="11.8" y="31.4" width="6.800" height="3" fill="#595959"/><rect x="11.8" y="35.4" width="6.800" height="3" fill="#595959"/><rect x="11.8" y="39.4" width="6.800" height="3" fill="#595959"/><rect x="11.8" y="43.5" width="6.800" height="3" fill="#595959"/><rect x="11.8" y="47.5" width="6.800" height="3" fill="#595959"/><rect x="11.8" y="51.6" width="6.800" height="3" fill="#595959"/><rect x="11.8" y="55.6" width="6.800" height="3" fill="#595959"/><rect x="11.8" y="59.7" width="6.800" height="3" fill="#4aa4ea"/><rect x="11.8" y="63.7" width="6.800" height="3" fill="#4aa4ea"/><rect x="11.8" y="67.8" width="6.800" height="3" fill="#4aa4ea"/><rect x="11.8" y="71.8" width="6.800" height="3" fill="#4aa4ea"/><rect x="11.8" y="75.9" width="6.800" height="3" fill="#4aa4ea"/><rect x="11.8" y="79.9" width="6.800" height="3" fill="#4aa4ea"/><rect x="11.8" y="84.0" width="6.800" height="3" fill="#4aa4ea"/><rect x="11.8" y="88.0" width="6.800" height="3" fill="#4aa4ea"/><rect x="11.8" y="92.1" width="6.800" height="3" fill="#4aa4ea"/><rect x="11.8" y="96.1" width="6.800" height="3" fill="#4aa4ea"/><rect x="11.8" y="100.2" width="6.800" height="3" fill="#4aa4ea"/><rect x="11.8" y="104.2" width="6.800" height="3" fill="#4aa4ea"/><rect x="11.8" y="108.3" width="6.800" height="3" fill="#4aa4ea"/><circle cx="9.600" cy="28.500" r="5" fill="#f4f4f4"/></svg><svg class="ic " style="left:21px;top:566px;width:20px;height:20px"><use href="#i-lock"/></svg><svg class="ic dm" style="left:53px;top:566px;width:20px;height:20px"><use href="#i-select"/></svg><svg class="ic " style="left:98.5px;top:566px;width:20px;height:20px"><use href="#i-present"/></svg><svg class="ic " style="left:144.5px;top:566px;width:20px;height:20px"><use href="#i-windows"/></svg><svg class="ic dm" style="left:190.5px;top:566px;width:20px;height:20px"><use href="#i-noflag"/></svg><svg class="ic dm" style="left:219.5px;top:566px;width:20px;height:20px"><use href="#i-hash"/></svg><svg class="ic dm" style="left:282px;top:566px;width:20px;height:20px"><use href="#i-clipplus"/></svg><svg class="ic " style="left:328.5px;top:566px;width:20px;height:20px"><use href="#i-wrench"/></svg><svg class="ic " style="left:374.5px;top:566px;width:20px;height:20px"><use href="#i-piano"/></svg><svg class="ic " style="left:421px;top:566px;width:20px;height:20px"><use href="#i-keyb"/></svg><svg class="ic " style="left:534.5px;top:564px;width:24px;height:24px"><use href="#i-playc"/></svg><svg class="ic" style="left:589px;top:567.300px;width:18px;height:18px;color:#4aa4ea"><use href="#i-power"/></svg><div class="cv g" style="left:48px;top:82px;width:533px;height:477px"><div class="abs" style="left:-48px;top:-82px;width:1407px;height:993px"><div class="cm" style="left:66.500px;top:102px;font-size:17px;font-weight:bold;font-style:italic;line-height:22px;letter-spacing:-.75px">Shaker</div><svg class="cords" width="1407" height="993"><path class="pc" d="M101.400 163V186M147.500 162V186M101.400 207V218M101.400 240V265"/><path class="pc" d="M314.700 260.400C297.500 311.100 122 300.400 101.300 352M314.700 295.300C292.300 337 125.700 308.400 101.300 352M314.700 327.100C297.700 364 119.700 313.900 101.300 352"/><path class="sgb" d="M101.400 286V352"/><path class="sgb" d="M101.400 373V408.500"/><path class="sgb" d="M120.500 373C120.500 397 218.500 385 218.500 409"/><path class="sgb" d="M120.500 373C120.500 396 257.500 381 257.500 404"/><path class="sgb" d="M101.400 457V471"/><path class="sgb" d="M131 457L126 471"/><path class="sgd" d="M101.400 286V352"/><path class="sgd" d="M101.400 373V408.500"/><path class="sgd" d="M120.500 373C120.500 397 218.500 385 218.500 409"/><path class="sgd" d="M120.500 373C120.500 396 257.500 381 257.500 404"/><path class="sgd" d="M101.400 457V471"/><path class="sgd" d="M131 457L126 471"/></svg><div class="ui" style="left:92px;top:140px;width:24px;height:24px"><svg width="24" height="24"><path d="M6.400 6.400l11.200 11.200M17.600 6.400L6.400 17.600" stroke="#d6eef0" stroke-width="2.400"/></svg></div><div class="nb" style="left:138px;top:140px;width:50px;padding-left:12px;font-size:12.5px"><i></i>0</div><div class="ob " style="left:92px;top:185px;width:65px;letter-spacing:0.030px">metro 125</div><svg class="abs" style="left:92px;top:185px;overflow:visible" width="65" height="23"><path d="M6.2 0a3.200 3.200 0 0 0 6.400 0z" fill="#2e1719" stroke="#d49a9a" stroke-width=".8"/><path d="M52.3 0a3.200 3.200 0 0 0 6.400 0z" fill="#2e1719" stroke="#8fd0d8" stroke-width=".8"/><path d="M6.2 23a3.200 3.200 0 0 1 6.400 0z" fill="#1c200b" stroke="#c2c94e" stroke-width="1"/></svg><div class="ui" style="left:92px;top:217px;width:24px;height:24px"><svg width="24" height="24"><circle cx="12" cy="12" r="6.800" fill="none" stroke="#6c6c6c" stroke-width="2"/><circle cx="12" cy="12" r="3.600" fill="#cfe9ec"/></svg></div><div class="ob " style="left:92px;top:264px;width:62px;letter-spacing:-0.151px">p impulse</div><svg class="abs" style="left:92px;top:264px;overflow:visible" width="62" height="23"><path d="M6.2 0a3.200 3.200 0 0 0 6.400 0z" fill="#2e1719" stroke="#d49a9a" stroke-width=".8"/><path d="M6.2 23a3.200 3.200 0 0 1 6.400 0z" fill="#1c200b" stroke="#c2d05a" stroke-width="1"/></svg><div class="nb" style="left:305px;top:238px;width:99px;padding-left:16px;letter-spacing:-0.451px">shake_damp<svg class="abs" style="left:3px;top:5px" width="8" height="14"><path fill="#6a6a6a" d="M0 5.500 4 .500 8 5.500zM0 8.500 4 13.500 8 8.500z"/></svg></div><div class="abs" style="left:404px;top:238px;width:2px;height:23px;background:#b4b4b4"></div><div class="nb" style="left:406px;top:238px;width:49px;padding-left:13px;letter-spacing:0.061px"><i></i>0.84</div><div class="nb" style="left:305px;top:272px;width:99px;padding-left:16px;letter-spacing:-0.140px">res_freq<svg class="abs" style="left:3px;top:5px" width="8" height="14"><path fill="#6a6a6a" d="M0 5.500 4 .500 8 5.500zM0 8.500 4 13.500 8 8.500z"/></svg></div><div class="abs" style="left:404px;top:272px;width:2px;height:23px;background:#b4b4b4"></div><div class="nb" style="left:406px;top:272px;width:49px;padding-left:13px;letter-spacing:-0.026px"><i></i>1473.</div><div class="nb" style="left:305px;top:304px;width:99px;padding-left:16px;letter-spacing:-0.149px">num_objects<svg class="abs" style="left:3px;top:5px" width="8" height="14"><path fill="#6a6a6a" d="M0 5.500 4 .500 8 5.500zM0 8.500 4 13.500 8 8.500z"/></svg></div><div class="abs" style="left:404px;top:304px;width:2px;height:23px;background:#b4b4b4"></div><div class="nb" style="left:406px;top:304px;width:49px;padding-left:13px;letter-spacing:-0.194px"><i></i>16.</div><div class="ob " style="left:92px;top:351px;width:38px;letter-spacing:-0.132px">gen~</div><svg class="abs" style="left:92px;top:351px;overflow:visible" width="38" height="23"><path d="M6.2 0a3.200 3.200 0 0 0 6.400 0z" fill="#2e1719" stroke="#d49a9a" stroke-width=".8"/><path d="M6.2 23a3.200 3.200 0 0 1 6.400 0z" fill="#1c200b" stroke="#c2d05a" stroke-width="1"/><path d="M25.3 23a3.200 3.200 0 0 1 6.400 0z" fill="#1c200b" stroke="#c2d05a" stroke-width="1"/></svg><div class="cm" style="left:139.300px;top:410.500px;font-size:10px;line-height:12px;letter-spacing:-.25px;color:#0a0a0a;-webkit-text-stroke:.25px #0a0a0a">live.gain~</div><svg class="abs" style="left:94px;top:423px" width="132" height="22"><defs><linearGradient id="gg" x1="0" x2="1"><stop offset="0" stop-color="#05e05c"/><stop offset=".35" stop-color="#2ce868"/><stop offset="1" stop-color="#9af080"/></linearGradient></defs><rect x="0" y="0" width="131" height="5.200" fill="#2b2b2b"/><rect x="0" y="6.300" width="131" height="5.200" fill="#2b2b2b"/><rect x="0" y="0" width="76.200" height="5.200" fill="url(#gg)"/><rect x="0" y="6.300" width="79.300" height="5.200" fill="url(#gg)"/><rect x="106.600" y="0" width="1.300" height="5.200" fill="#c2d860"/><rect x="110.600" y="6.300" width="1.300" height="5.200" fill="#c2d860"/><rect x="120.600" y="0" width="1.800" height="11.500" fill="#dcdcdc"/><path d="M121.500 13l4 7.300h-8z" fill="#9a9a9a" stroke="#6e6e6e" stroke-width=".8"/></svg><div class="cm" style="left:95px;top:445.600px;font-size:9.500px;line-height:12px;-webkit-text-stroke:.3px #0a0a0a">0.0 dB</div><div class="ui" style="left:92px;top:470px;width:44px;height:44px"><svg width="44" height="44"><path fill="#cfe8ec" d="M8.600 16.200h5.900l8.700-6.800v25.200l-8.700-6.800H8.600z"/><path d="M26.200 19.200A4 4 0 0 1 26.200 24.800" stroke="#cfe8ec" stroke-width="2.400" fill="none"/><path d="M28.500 16.400A7.500 7.500 0 0 1 28.500 27.600" stroke="#cfe8ec" stroke-width="2.300" fill="none"/><path d="M30.900 13.800A11 11 0 0 1 30.900 30.200" stroke="#cfe8ec" stroke-width="2.300" fill="none"/></svg></div><svg class="abs" style="left:248px;top:404px" width="300" height="100"><rect width="300" height="100" fill="#333"/><path d="M0 100L0.2 97.3L1.3 83.1L2.9 71.6L5.7 71.0L8.4 71.6L10.0 67.7L12.2 63.9L14.4 56.8L17.2 49.1L19.3 45.9L21.0 54.6L22.6 46.9L24.8 49.7L26.5 46.4L28.1 52.4L29.7 59.0L30.8 63.9L33.0 61.7L36.3 60.6L38.0 68.8L40.1 67.2L42.3 62.3L44.0 67.2L45.6 63.9L47.3 67.7L49.4 65.0L51.6 65.6L53.3 72.1L54.4 80.9L56.0 72.7L57.7 74.3L59.3 71.0L60.9 79.8L62.6 78.7L64.2 68.8L65.9 64.5L68.1 67.7L69.7 66.1L71.9 68.3L73.5 69.4L75.7 67.2L77.4 73.8L79.0 67.7L80.6 67.2L81.7 68.8L82.8 81.4L84.5 79.8L86.1 68.8L87.8 70.5L89.4 69.4L91.0 74.9L93.2 65.6L94.9 74.3L96.5 78.1L98.2 80.9L99.2 79.8L100.9 82.5L102.5 78.1L103.6 77.0L105.3 73.8L107.5 71.0L109.6 71.6L112.4 71.6L115.1 73.2L117.3 74.9L119.0 80.3L120.0 79.8L121.7 84.2L123.3 79.8L125.5 78.1L127.7 73.8L129.3 77.6L131.0 82.0L132.6 82.5L134.3 78.7L136.5 73.8L138.7 77.6L141.4 84.7L144.1 80.3L146.3 76.5L148.0 78.1L149.1 87.4L150.7 77.0L152.9 80.3L154.6 76.5L156.2 72.7L158.4 74.9L160.6 76.0L162.2 83.1L164.4 82.5L167.7 83.1L169.3 85.8L171.0 79.8L172.6 77.0L174.3 90.7L175.9 79.8L177.6 78.1L179.7 74.3L181.4 79.8L183.0 91.3L184.7 80.9L186.9 79.2L189.0 82.5L191.2 79.2L193.4 80.9L195.6 81.4L197.8 80.9L200.0 82.5L201.6 85.8L203.3 83.1L204.9 79.2L207.1 86.4L208.7 81.4L210.9 78.1L213.1 80.3L215.3 84.7L216.4 85.3L218.6 80.3L220.2 83.1L222.4 78.1L224.6 79.2L225.7 83.6L227.4 78.7L229.5 80.9L232.3 83.6L234.5 79.2L236.1 80.3L237.8 83.1L239.9 79.2L242.1 79.8L243.2 78.1L244.9 84.2L247.1 86.9L249.2 80.9L250.9 84.2L252.5 77.6L253.6 73.8L255.3 85.3L256.9 80.9L259.1 79.8L261.3 80.3L262.9 82.5L265.7 83.6L267.9 82.5L270.0 83.1L272.2 82.0L274.4 87.4L277.2 85.8L279.3 83.1L281.5 79.2L283.7 82.0L285.9 77.0L288.1 79.2L290.3 80.3L292.5 83.1L294.7 77.0L296.9 80.3L298.5 78.1L299.6 97.3L300 100z" fill="#cfe6ea"/><rect x="80.8" y="0" width="1.200" height="100" fill="#6a6a6a"/><rect x="162.7" y="0" width="1.200" height="100" fill="#6a6a6a"/><rect x="243.8" y="0" width="1.200" height="100" fill="#6a6a6a"/></svg></div></div></div></div>
<div class="win ina" style="left:124px;top:619px;width:191px;height:329px"><div class="abs" style="left:-124px;top:-619px;width:1407px;height:993px"><div class="tbar" style="left:124px;top:619px;width:191px;right:auto"></div><div class="tl d" style="left:132px;top:624px"></div><div class="tl" style="left:152px;top:624px"></div><div class="tl" style="left:172px;top:624px"></div><div class="ttl" style="left:193.500px;top:619px;letter-spacing:.1px">[impulse]</div><div class="zm" style="left:132px;top:651px;line-height:14px">100%</div><svg class="abs" style="left:165.500px;top:655px" width="7" height="6"><path fill="#8b8b8b" d="M.3.500h6.200L3.400 5.300z"/></svg><svg class="ic " style="left:186px;top:648px;width:20px;height:20px"><use href="#t-obj"/></svg><svg class="ic " style="left:213px;top:648px;width:20px;height:20px"><use href="#t-msg"/></svg><svg class="ic " style="left:239.5px;top:648px;width:20px;height:20px"><use href="#t-bubble"/></svg><svg class="ic " style="left:266.5px;top:648px;width:20px;height:20px"><use href="#t-toggle"/></svg><svg class="ic " style="left:131px;top:683px;width:20px;height:20px"><use href="#i-cube"/></svg><svg class="ic " style="left:131px;top:714px;width:20px;height:20px"><use href="#i-target"/></svg><svg class="ic " style="left:131px;top:744.5px;width:20px;height:20px"><use href="#i-beap"/></svg><svg class="ic " style="left:131px;top:775px;width:20px;height:20px"><use href="#i-note"/></svg><svg class="ic " style="left:131px;top:806px;width:20px;height:20px"><use href="#i-film"/></svg><svg class="ic " style="left:131px;top:837px;width:20px;height:20px"><use href="#i-image"/></svg><svg class="ic " style="left:131px;top:868px;width:20px;height:20px"><use href="#i-clip"/></svg><svg class="ic " style="left:131px;top:898.5px;width:20px;height:20px"><use href="#i-plug"/></svg><svg class="ic " style="left:288px;top:682px;width:20px;height:20px"><use href="#i-search"/></svg><svg class="ic " style="left:288px;top:713.5px;width:20px;height:20px"><use href="#i-info2"/></svg><svg class="ic " style="left:288px;top:744.5px;width:20px;height:20px"><use href="#i-book"/></svg><svg class="ic " style="left:288px;top:775px;width:20px;height:20px"><use href="#i-list"/></svg><svg class="ic " style="left:288px;top:815px;width:20px;height:20px"><use href="#i-camera"/></svg><svg class="ic " style="left:288px;top:845.5px;width:20px;height:20px"><use href="#i-sliders"/></svg><svg class="ic " style="left:127.5px;top:922.5px;width:20px;height:20px"><use href="#i-lock"/></svg><svg class="ic " style="left:154.5px;top:922.5px;width:20px;height:20px"><use href="#i-select2"/></svg><svg class="ic " style="left:185.5px;top:922.5px;width:20px;height:20px"><use href="#i-present"/></svg><svg class="ic " style="left:216.5px;top:922.5px;width:20px;height:20px"><use href="#i-windows"/></svg><svg class="ic " style="left:247.5px;top:922.5px;width:20px;height:20px"><use href="#i-noflag"/></svg><div class="cv" style="left:158px;top:675px;width:123px;height:241px"><div class="abs" style="left:-158px;top:-675px;width:1407px;height:993px"><svg class="cords" width="1407" height="993"><path class="pc" d="M203.500 723V756"/><path class="sgb" d="M203.500 777V813"/><path class="sgb" d="M203.500 834V853"/><path class="sgd" d="M203.500 777V813"/><path class="sgd" d="M203.500 834V853"/></svg><div class="ui" style="left:194px;top:699px;width:25px;height:25px"><div class="abs" style="left:0;top:1px;width:25px;text-align:center;font-size:11px;line-height:12px;font-weight:bold">1</div><svg class="abs" style="left:6px;top:14px" width="13" height="8"><path fill="#b8e4e4" d="M0 0h13L6.500 8z"/></svg></div><div class="ob " style="left:194px;top:755px;width:41px;letter-spacing:-0.123px">click~</div><svg class="abs" style="left:194px;top:755px;overflow:visible" width="41" height="23"><path d="M6.3 0a3.200 3.200 0 0 0 6.400 0z" fill="#2e1719" stroke="#d49a9a" stroke-width=".8"/><path d="M6.3 23a3.200 3.200 0 0 1 6.400 0z" fill="#1c200b" stroke="#c2d05a" stroke-width="1"/></svg><div class="ob " style="left:194px;top:812px;width:38px;letter-spacing:-0.132px">gen~</div><svg class="abs" style="left:194px;top:812px;overflow:visible" width="38" height="23"><path d="M6.3 0a3.200 3.200 0 0 0 6.400 0z" fill="#2e1719" stroke="#d49a9a" stroke-width=".8"/><path d="M6.3 23a3.200 3.200 0 0 1 6.400 0z" fill="#1c200b" stroke="#c2d05a" stroke-width="1"/></svg><div class="ui" style="left:194px;top:852px;width:25px;height:25px"><svg class="abs" style="left:6px;top:3px" width="13" height="8"><path fill="#b8e4e4" d="M0 0h13L6.500 8z"/></svg><div class="abs" style="left:0;top:12px;width:25px;text-align:center;font-size:11px;line-height:12px;font-weight:bold">1</div></div></div></div></div></div>
<div class="win ina" style="left:638px;top:14px;width:757px;height:967px"><div class="abs" style="left:-638px;top:-14px;width:1407px;height:993px"><div class="tbar" style="left:638px;top:14px;width:757px;right:auto"></div><div class="tl d" style="left:646px;top:19px"></div><div class="tl" style="left:666px;top:19px"></div><div class="tl" style="left:686px;top:19px"></div><div class="ttl" style="left:638px;top:14px;width:757px;text-align:center">untitled</div><div class="zm" style="left:646px;top:46px;line-height:14px">100%</div><svg class="abs" style="left:679.500px;top:50px" width="7" height="6"><path fill="#8b8b8b" d="M.3.500h6.200L3.400 5.300z"/></svg><svg class="ic " style="left:708.7px;top:43px;width:20px;height:20px"><use href="#t-obj"/></svg><svg class="ic " style="left:737.5px;top:43px;width:20px;height:20px"><use href="#t-bubble"/></svg><svg class="ic " style="left:766.3px;top:43px;width:20px;height:20px"><use href="#t-fsq"/></svg><svg class="ic " style="left:795.5px;top:43px;width:20px;height:20px"><use href="#t-code"/></svg><svg class="ic " style="left:841.5px;top:43px;width:20px;height:20px"><use href="#t-bucket"/></svg><svg class="ic" style="left:1338px;top:44px;width:20px;height:19px"><use href="#t-grid"/></svg><svg class="ic " style="left:645px;top:392.3px;width:20px;height:20px"><use href="#i-cube"/></svg><svg class="ic " style="left:645px;top:429px;width:20px;height:20px"><use href="#i-target"/></svg><svg class="ic " style="left:645px;top:498.3px;width:20px;height:20px"><use href="#i-clip"/></svg><svg class="ic " style="left:645px;top:567.5px;width:20px;height:20px"><use href="#i-plus"/></svg><svg class="ic " style="left:645px;top:604.3px;width:20px;height:20px"><use href="#i-tilde"/></svg><svg class="ic " style="left:1368px;top:343px;width:20px;height:20px"><use href="#i-search"/></svg><svg class="ic " style="left:1368px;top:389.7px;width:20px;height:20px"><use href="#i-info2"/></svg><svg class="ic " style="left:1368px;top:435.5px;width:20px;height:20px"><use href="#i-book"/></svg><svg class="ic " style="left:1368px;top:481px;width:20px;height:20px"><use href="#i-list"/></svg><svg class="ic " style="left:1368px;top:544.3px;width:20px;height:20px"><use href="#i-bookS"/></svg><svg class="ic " style="left:1368px;top:591px;width:20px;height:20px"><use href="#i-camera"/></svg><svg class="ic " style="left:1368px;top:653.5px;width:20px;height:20px"><use href="#i-cee"/></svg><svg class="ic " style="left:645.3px;top:954.2px;width:20px;height:20px"><use href="#i-lock"/></svg><svg class="ic " style="left:676px;top:954.2px;width:20px;height:20px"><use href="#i-select2"/></svg><svg class="ic " style="left:739.5px;top:954.2px;width:20px;height:20px"><use href="#i-windows"/></svg><svg class="ic " style="left:785.2px;top:954.2px;width:20px;height:20px"><use href="#i-noflag"/></svg><svg class="ic " style="left:814.4px;top:954.2px;width:20px;height:20px"><use href="#i-hash"/></svg><svg class="ic " style="left:860.6px;top:954.2px;width:20px;height:20px"><use href="#i-ring"/></svg><svg class="ic " style="left:889.2px;top:954.2px;width:20px;height:20px"><use href="#i-hammer"/></svg><svg class="ic " style="left:935.2px;top:954.2px;width:20px;height:20px"><use href="#i-clipplus"/></svg><div class="cv" style="left:672px;top:70px;width:689px;height:877px"><div class="abs" style="left:-672px;top:-70px;width:1407px;height:993px"><svg class="cords" width="1407" height="993"><path class="pc" d="M731 876V889M1308.700 876V889M731 99V105"/></svg><div class="ob " style="left:722px;top:77px;width:29px;letter-spacing:-0.062px">in 1</div><svg class="abs" style="left:722px;top:77px;overflow:visible" width="29" height="23"><path d="M5.8 23a3.200 3.200 0 0 1 6.400 0z" fill="#1c200b" stroke="#c2d05a" stroke-width="1"/></svg><div class="abs" style="left:722px;top:104px;width:596px;height:773px;background:#333;border-radius:7px 7px 0 0"></div><div class="abs" style="left:759px;top:120px;width:556px;height:740.500px;background:#282828"></div><div class="abs" style="left:1230px;top:105px;width:83px;text-align:right;font-size:11.500px;font-weight:bold;line-height:14px;letter-spacing:-.3px;color:#fff">CodeBox</div><div class="ln" style="left:729.500px;top:121.100px;width:27px">1
2
3
4
5
6
7
8
9
10
11
12
13
14
15
16
17
18
19
20
21
22
23
24
25
26
27
28
29
30
31
32
33
34
35
36
37
38
39
40
41
42
43
44
45
46
47
48
49
50
51</div><div class="code" style="left:761.500px;top:121.800px"><span class="c">// a &#x27;maraca&#x27; sound</span>
maraca(level, c0, c1) {
    History output0, output1;
    <span class="c">// source is just enveloped noise:</span>
    input <span class="k">=</span> level <span class="k"><u>*</u></span> noise();
    <span class="c">// resonant gourd filter:</span>
    input <span class="k">=</span> input <span class="k">−</span> output0 <span class="k"><u>*</u></span> c0;
    input <span class="k">=</span> input <span class="k">−</span> output1 <span class="k"><u>*</u></span> c1;
    output1 <span class="k">=</span> output0;
    output0 <span class="k">=</span> input;
    <span class="c">// high pass out:</span>
    <span class="b">return</span> output0 <span class="k">−</span> output1;
}

Param num_objects(<span class="n">25</span>, min<span class="k">=</span><span class="n">1</span>);
Param res_freq(<span class="n">3200.0</span>);
Param shake_damp(<span class="n">0.5</span>, min<span class="k">=</span><span class="n">0</span>, max<span class="k">=</span><span class="n">1</span>);

History shakeEnergy(<span class="n">0</span>);                 <span class="c">// energy in the system</span>
History sndLevel(<span class="n">0</span>);                    <span class="c">// sound envelope</span>
History coeffs0(<span class="n">−1.72</span>),
        coeffs1(<span class="n">0.9216</span>);                <span class="c">// filter coefficients</span>
History gain(<span class="n">10</span>);                       <span class="c">// compensating amplification</span>

<span class="c">// only re−calculate when param changes:</span>
<span class="b">if</span> (change(num_objects)) {
    gain <span class="k">=</span> log(num_objects) <span class="k">/</span> log(<span class="n">4.0</span>) <span class="k"><u>*</u></span> <span class="n">120.0</span> <span class="k">/</span> num_objects;
}
<span class="c">// only re−calculate when param changes:</span>
<span class="b">if</span> (change(res_freq)) {
    coeffs0 <span class="k">=</span> <span class="n">−0.96</span> <span class="k"><u>*</u></span> <span class="n">2.0</span> <span class="k"><u>*</u></span> cos(res_freq <span class="k"><u>*</u></span> <span class="b">TWOPI</span> <span class="k">/</span> samplerate);
}
coeffs1 <span class="k">=</span> <span class="n">0.9216</span>;
soundDecay <span class="k">=</span> <span class="n">0.95</span>;
systemDecay <span class="k">=</span> <span class="n">.998</span> <span class="k">+</span> (shake_damp <span class="k"><u>*</u></span> <span class="n">.002</span>);

<span class="c">// system energy input:</span>
shakeEnergy <span class="k">=</span> clip(shakeEnergy <span class="k">+</span> <span class="b">in1</span> <span class="k"><u>*</u></span> <span class="n">0.001</span>, <span class="n">−1</span>, <span class="n">1</span>);

<span class="c">// if collision, add energy:</span>
<span class="b">if</span> (noise() <span class="k"><u>*</u></span> <span class="n">1024</span> <span class="k">&lt;</span> num_objects) {
    sndLevel <span class="k">+=</span> gain <span class="k"><u>*</u></span> shakeEnergy;
}

<span class="c">// use the energy:</span>
<span class="b">out1</span> <span class="k">=</span> maraca(sndLevel, coeffs0, coeffs1);
<span class="b">out2</span> <span class="k">=</span> maraca(sndLevel, coeffs0, coeffs1);

<span class="c">// it all ends in exponential decay (entropy):</span>
shakeEnergy <span class="k"><u>*</u>=</span> systemDecay;
sndLevel <span class="k"><u>*</u>=</span> soundDecay;</div><svg class="abs" style="left:731px;top:862px;color:#f0f0f0" width="12" height="12"><use href="#i-hammer"/></svg><div class="ob " style="left:722px;top:888px;width:37px;letter-spacing:0.182px">out 1</div><svg class="abs" style="left:722px;top:888px;overflow:visible" width="37" height="23"><path d="M5.8 0a3.200 3.200 0 0 0 6.400 0z" fill="#2e1719" stroke="#d49a9a" stroke-width=".8"/></svg><div class="ob " style="left:1299px;top:888px;width:37px;letter-spacing:0.202px">out 2</div><svg class="abs" style="left:1299px;top:888px;overflow:visible" width="37" height="23"><path d="M6.5 0a3.200 3.200 0 0 0 6.400 0z" fill="#2e1719" stroke="#d49a9a" stroke-width=".8"/></svg></div></div></div></div>
</body></html>
